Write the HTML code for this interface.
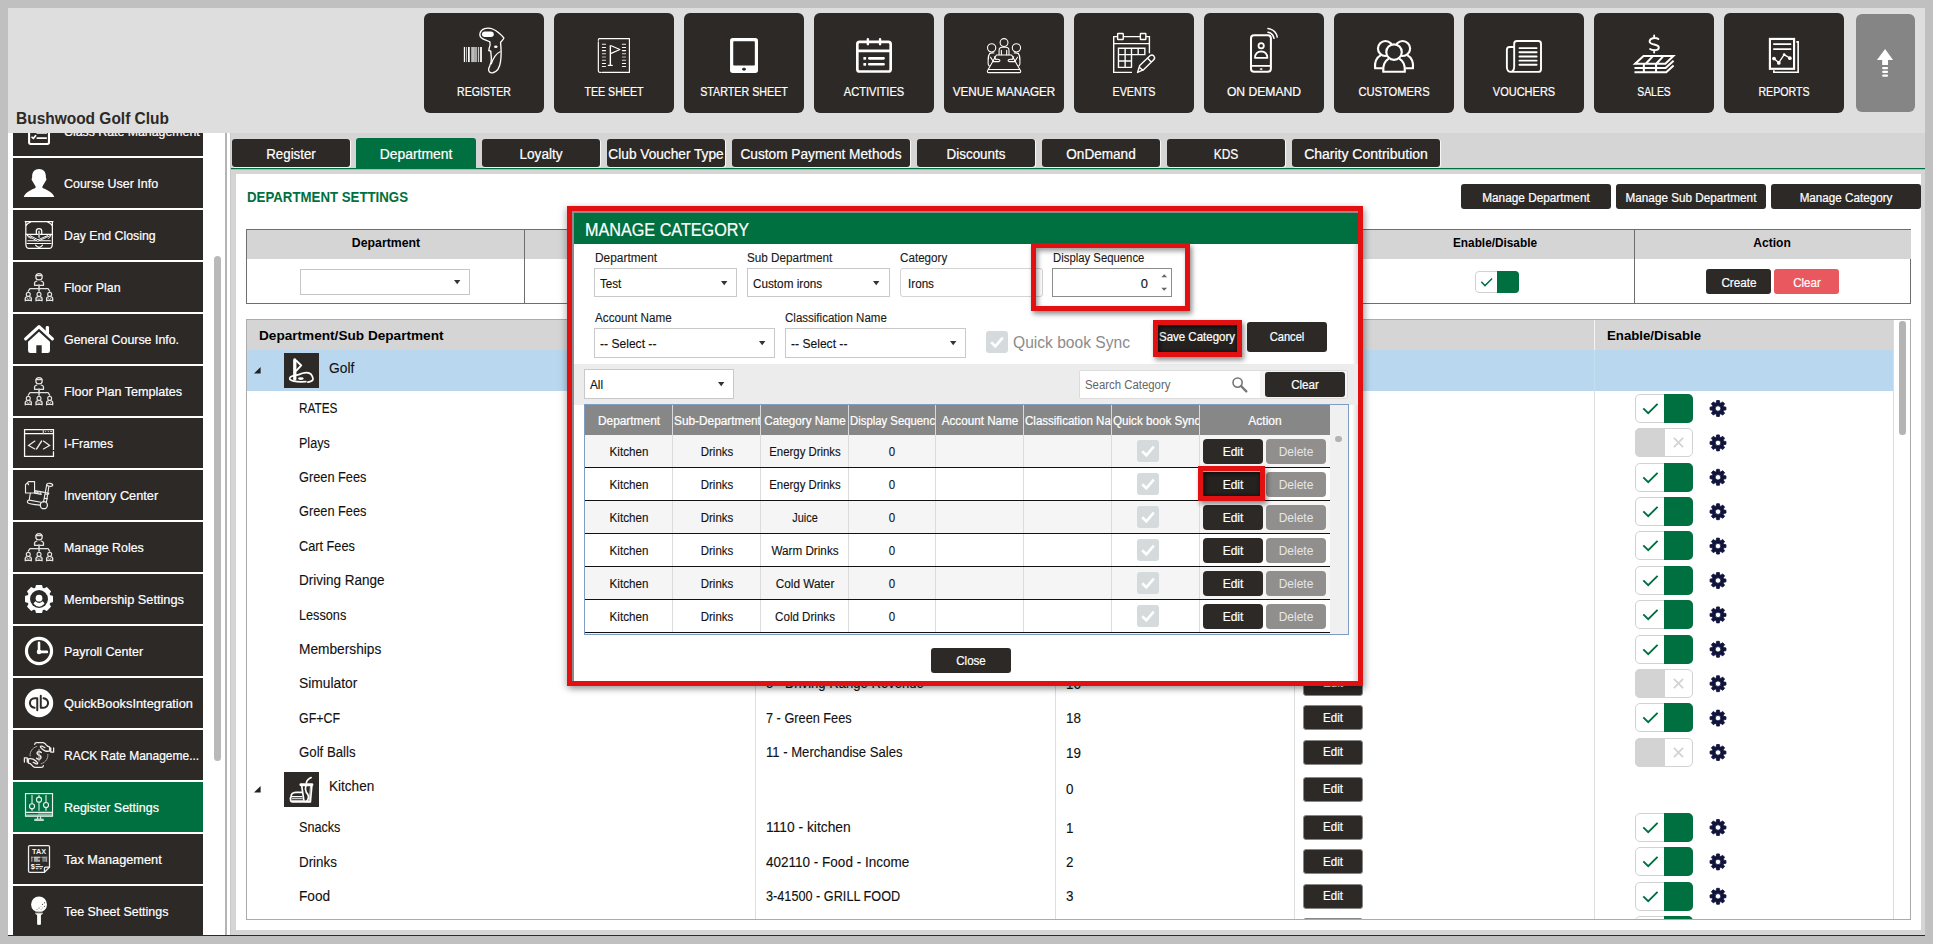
<!DOCTYPE html>
<html lang="en"><head><meta charset="utf-8"><title>Register Settings - Manage Category</title><style>
html,body{margin:0;padding:0}
body{width:1933px;height:944px;background:#c0c0c0;position:relative;overflow:hidden;font-family:"Liberation Sans",sans-serif}
.a{position:absolute;box-sizing:border-box}
.t{position:absolute;white-space:nowrap;display:block}
svg{overflow:visible}
</style></head><body>
<div class="a" style="left:8px;top:8px;width:1917px;height:928px;background:#dedede;"></div>
<div class="a" style="left:8px;top:133px;width:218px;height:802px;background:#fff;"></div>
<div class="a" style="left:225px;top:133px;width:2px;height:802px;background:#b4b4b4;"></div>
<div class="a" style="left:227px;top:133px;width:3px;height:802px;background:#fff;"></div>
<div class="a" style="left:230px;top:133px;width:1px;height:802px;background:#c8c8c8;"></div>
<div class="a" style="left:231px;top:133px;width:1694px;height:802px;background:#d5d5d5;"></div>
<div class="a" style="left:8px;top:935px;width:1917px;height:1px;background:#2d2926;"></div>
<span class="t" style="left:16.0px;top:107.5px;font-size:16px;line-height:21px;font-weight:700;color:#2d2926;transform:scaleX(0.9671);transform-origin:0 50%;">Bushwood Golf Club</span>
<div class="a" style="left:424px;top:13px;width:120px;height:100px;background:#2d2926;border-radius:6px;"></div>
<span class="t" style="left:484.0px;top:83.0px;font-size:13px;line-height:17px;-webkit-text-stroke:0.22px #fff;color:#fff;transform:translateX(-50%) scaleX(0.8111);transform-origin:50% 50%;">REGISTER</span>
<svg class="a" style="left:444px;top:20px" width="1" height="1"><g transform="scale(0.063542)" fill="none" stroke="#fff" stroke-linecap="round" stroke-linejoin="round">
<g stroke="none">
<rect x="312" y="425" width="20" height="237" fill="#fff"/><rect x="347" y="425" width="13" height="237" fill="#ccc"/>
<rect x="378" y="425" width="27" height="237" fill="#fff"/><rect x="428" y="425" width="44" height="237" fill="#bdbdbd"/>
<rect x="472" y="425" width="50" height="237" fill="#a9a9a9"/><rect x="535" y="425" width="17" height="237" fill="#c8c8c8"/>
<rect x="566" y="425" width="32" height="237" fill="#e4e4e4"/>
<rect x="598" y="180" width="185" height="88" rx="44" fill="#fff"/><ellipse cx="815" cy="420" rx="28" ry="20" fill="#fff"/></g>
<path stroke-width="21" d="M600 290 C540 250 560 160 640 135 C720 115 800 150 860 200 C900 235 930 260 942 285 C935 310 900 335 890 352 C900 450 905 560 890 650 C880 730 840 810 770 830 C720 840 690 800 705 760 C720 720 750 690 745 600 C742 560 738 520 736 490 L705 480 L712 440 C722 420 730 380 722 345 C690 325 640 315 600 290 Z"/>
<path stroke-width="19" d="M882 500 C830 520 770 600 745 690"/></g></svg>
<div class="a" style="left:554px;top:13px;width:120px;height:100px;background:#2d2926;border-radius:6px;"></div>
<span class="t" style="left:614.0px;top:83.0px;font-size:13px;line-height:17px;-webkit-text-stroke:0.22px #fff;color:#fff;transform:translateX(-50%) scaleX(0.8195);transform-origin:50% 50%;">TEE SHEET</span>
<svg class="a" style="left:574px;top:20px" width="1" height="1"><g transform="scale(0.063542)" fill="none" stroke="#fff" stroke-linecap="round" stroke-linejoin="round">
<path stroke-width="18" d="M383 345 V800 Q383 825 405 825 H420 M440 825 H872 V293 H400 Q383 293 383 320"/>
<g stroke-width="16"><path d="M446 383 H496 M761 383 H812" stroke="#eee"/><path d="M446 433 H496 M761 433 H812" stroke="#fff"/><path d="M446 482 H496 M761 482 H812" stroke="#fff"/><path d="M446 531 H496 M761 531 H812" stroke="#ddd"/><path d="M446 583 H496 M761 583 H812" stroke="#bbb"/><path d="M446 635 H496 M761 635 H812" stroke="#ddd"/><path d="M446 685 H496 M761 685 H812" stroke="#fff"/><path d="M446 733 H496 M761 733 H812" stroke="#eee"/></g>
<path stroke-width="22" d="M572 398 V715" stroke-linecap="butt"/><path stroke-width="18" d="M540 715 H602"/>
<path stroke-width="18" d="M585 405 L722 465 L585 525"/></g></svg>
<div class="a" style="left:684px;top:13px;width:120px;height:100px;background:#2d2926;border-radius:6px;"></div>
<span class="t" style="left:744.0px;top:83.0px;font-size:13px;line-height:17px;-webkit-text-stroke:0.22px #fff;color:#fff;transform:translateX(-50%) scaleX(0.8240);transform-origin:50% 50%;">STARTER SHEET</span>
<svg class="a" style="left:704px;top:20px" width="1" height="1"><g transform="scale(0.063542)" fill="none" stroke="#fff" stroke-linecap="round" stroke-linejoin="round">
<g stroke="none"><rect x="410" y="285" width="440" height="548" rx="42" fill="#fff"/><rect x="460" y="335" width="340" height="380" rx="12" fill="#2d2926"/><ellipse cx="630" cy="775" rx="30" ry="22" fill="#2d2926"/></g></g></svg>
<div class="a" style="left:814px;top:13px;width:120px;height:100px;background:#2d2926;border-radius:6px;"></div>
<span class="t" style="left:874.0px;top:83.0px;font-size:13px;line-height:17px;-webkit-text-stroke:0.22px #fff;color:#fff;transform:translateX(-50%) scaleX(0.8532);transform-origin:50% 50%;">ACTIVITIES</span>
<svg class="a" style="left:834px;top:20px" width="1" height="1"><g transform="scale(0.063542)" fill="none" stroke="#fff" stroke-linecap="round" stroke-linejoin="round">
<rect x="367" y="345" width="525" height="465" rx="36" stroke-width="42"/><path stroke-width="42" d="M367 487 H892" stroke-linecap="butt"/>
<path stroke-width="38" d="M533 303 V380 M725 303 V380"/>
<g stroke="none" fill="#fff"><rect x="462" y="582" width="44" height="44" rx="7"/><rect x="462" y="675" width="44" height="44" rx="7"/></g>
<path stroke-width="42" d="M555 603 H780 M555 697 H780"/></g></svg>
<div class="a" style="left:944px;top:13px;width:120px;height:100px;background:#2d2926;border-radius:6px;"></div>
<span class="t" style="left:1004.0px;top:83.0px;font-size:13px;line-height:17px;-webkit-text-stroke:0.22px #fff;color:#fff;transform:translateX(-50%) scaleX(0.8989);transform-origin:50% 50%;">VENUE MANAGER</span>
<svg class="a" style="left:964px;top:20px" width="1" height="1"><g transform="scale(0.063542)" fill="none" stroke="#fff" stroke-linecap="round" stroke-linejoin="round">
<g stroke-width="17">
<circle cx="630" cy="355" r="62"/><circle cx="435" cy="438" r="65"/><circle cx="825" cy="438" r="65"/>
<path d="M552 545 V480 Q552 430 600 430 H660 Q708 430 708 480 V545 M588 475 V545 M672 475 V545"/>
<path d="M510 552 H750 L890 800 Q900 828 870 828 H390 Q360 828 370 800 Z M385 778 H875"/>
<path d="M470 520 Q380 505 380 600 V690 Q383 715 400 722 M405 525 Q380 560 385 620"/>
<path d="M790 520 Q880 505 880 600 V690 Q877 715 860 722 M855 525 Q880 560 875 620"/>
<path d="M418 585 L462 655 M462 655 H545 Q575 650 560 628 Q550 615 500 620 L478 578"/>
<path d="M842 585 L798 655 M798 655 H715 Q685 650 700 628 Q710 615 760 620 L782 578"/>
</g></g></svg>
<div class="a" style="left:1074px;top:13px;width:120px;height:100px;background:#2d2926;border-radius:6px;"></div>
<span class="t" style="left:1134.0px;top:83.0px;font-size:13px;line-height:17px;-webkit-text-stroke:0.22px #fff;color:#fff;transform:translateX(-50%) scaleX(0.8267);transform-origin:50% 50%;">EVENTS</span>
<svg class="a" style="left:1094px;top:20px" width="1" height="1"><g transform="scale(0.063542)" fill="none" stroke="#fff" stroke-linecap="round" stroke-linejoin="round">
<g stroke-width="22" stroke-linejoin="miter">
<path d="M598 825 H310 V262 H872 V522 M310 372 H872" stroke-linecap="butt"/>
<rect x="372" y="212" width="88" height="96" rx="8" fill="#2d2926"/><rect x="730" y="212" width="86" height="96" rx="8" fill="#2d2926"/>
<path d="M385 445 H800 V545 H385 Z M490 445 V745 M590 445 V745 M695 445 V545 M385 545 V745 H590 M385 645 H590"/>
<path d="M720 715 L885 560 Q915 540 942 568 Q968 598 940 625 L775 785 L685 825 Z M850 605 L900 660 M718 748 L770 792" stroke-linejoin="round"/>
</g></g></svg>
<div class="a" style="left:1204px;top:13px;width:120px;height:100px;background:#2d2926;border-radius:6px;"></div>
<span class="t" style="left:1264.0px;top:83.0px;font-size:13px;line-height:17px;-webkit-text-stroke:0.22px #fff;color:#fff;transform:translateX(-50%) scaleX(0.9339);transform-origin:50% 50%;">ON DEMAND</span>
<svg class="a" style="left:1224px;top:20px" width="1" height="1"><g transform="scale(0.063542)" fill="none" stroke="#fff" stroke-linecap="round" stroke-linejoin="round">
<rect x="425" y="240" width="313" height="575" rx="48" stroke-width="32"/><path stroke-width="28" d="M425 722 H738" stroke-linecap="butt"/>
<ellipse cx="585" cy="772" rx="24" ry="13" fill="#fff" stroke="none"/>
<circle cx="585" cy="405" r="42" stroke-width="28"/>
<path stroke-width="28" d="M487 595 Q492 498 585 495 Q678 498 683 595 Z"/>
<path stroke-width="24" d="M692 193 Q770 205 787 288 M692 135 Q815 150 838 268"/></g></svg>
<div class="a" style="left:1334px;top:13px;width:120px;height:100px;background:#2d2926;border-radius:6px;"></div>
<span class="t" style="left:1394.0px;top:83.0px;font-size:13px;line-height:17px;-webkit-text-stroke:0.22px #fff;color:#fff;transform:translateX(-50%) scaleX(0.8596);transform-origin:50% 50%;">CUSTOMERS</span>
<svg class="a" style="left:1354px;top:20px" width="1" height="1"><g transform="scale(0.063542)" fill="none" stroke="#fff" stroke-linecap="round" stroke-linejoin="round">
<g stroke-width="34">
<circle cx="495" cy="448" r="118"/><circle cx="765" cy="448" r="118"/>
<path d="M332 760 C322 650 362 585 422 552 M318 760 H450 M928 760 C938 650 898 585 838 552 M942 760 H810" stroke-linecap="butt"/>
<circle cx="630" cy="505" r="122" fill="#2d2926"/>
<path d="M460 812 C452 700 500 635 548 608 M800 812 C808 700 760 635 712 608 M445 815 H815" stroke-linecap="butt"/>
</g></g></svg>
<div class="a" style="left:1464px;top:13px;width:120px;height:100px;background:#2d2926;border-radius:6px;"></div>
<span class="t" style="left:1524.0px;top:83.0px;font-size:13px;line-height:17px;-webkit-text-stroke:0.22px #fff;color:#fff;transform:translateX(-50%) scaleX(0.8456);transform-origin:50% 50%;">VOUCHERS</span>
<svg class="a" style="left:1484px;top:20px" width="1" height="1"><g transform="scale(0.063542)" fill="none" stroke="#fff" stroke-linecap="round" stroke-linejoin="round">
<path stroke-width="30" d="M475 425 V372 Q475 330 517 330 H855 Q897 330 897 372 V775 Q897 817 855 817 H425 Q360 815 360 740 V470 Q360 425 402 425 H475 V735 Q475 800 425 817"/>
<path stroke-width="30" d="M558 442 H828 M558 508 H828 M558 575 H828 M558 640 H828 M558 705 H828"/></g></svg>
<div class="a" style="left:1594px;top:13px;width:120px;height:100px;background:#2d2926;border-radius:6px;"></div>
<span class="t" style="left:1654.0px;top:83.0px;font-size:13px;line-height:17px;-webkit-text-stroke:0.22px #fff;color:#fff;transform:translateX(-50%) scaleX(0.7992);transform-origin:50% 50%;">SALES</span>
<svg class="a" style="left:1614px;top:20px" width="1" height="1"><g transform="scale(0.063542)" fill="none" stroke="#fff" stroke-linecap="round" stroke-linejoin="round">
<g stroke-width="32" stroke-linejoin="miter">
<path d="M332 690 L465 565 H935 L808 690 Z M500 688 L612 568 M665 688 L777 568"/>
<path d="M322 757 H812 L938 642 M322 822 H822 L938 716 M470 690 V822 M662 690 V822" stroke-linecap="butt"/>
<path d="M698 300 C660 272 560 280 560 338 C560 400 705 372 705 432 C705 482 612 486 568 456 M632 242 V288 M632 470 V512" stroke-width="30"/>
</g></g></svg>
<div class="a" style="left:1724px;top:13px;width:120px;height:100px;background:#2d2926;border-radius:6px;"></div>
<span class="t" style="left:1784.0px;top:83.0px;font-size:13px;line-height:17px;-webkit-text-stroke:0.22px #fff;color:#fff;transform:translateX(-50%) scaleX(0.8178);transform-origin:50% 50%;">REPORTS</span>
<svg class="a" style="left:1744px;top:20px" width="1" height="1"><g transform="scale(0.063542)" fill="none" stroke="#fff" stroke-linecap="round" stroke-linejoin="round">
<g stroke-linejoin="miter"><rect x="408" y="298" width="380" height="470" stroke-width="34"/>
<path stroke-width="26" d="M824 345 H852 V822 H470 V792" stroke-linecap="butt"/>
<path stroke-width="28" d="M470 378 H733 M470 458 H733"/>
<path stroke-width="20" d="M472 605 L548 672 L632 545 L722 600" stroke-linejoin="round"/>
<g stroke="none" fill="#fff"><circle cx="472" cy="607" r="30"/><circle cx="548" cy="675" r="29"/><circle cx="632" cy="543" r="20"/><circle cx="722" cy="600" r="29"/></g></g></g></svg>
<div class="a" style="left:1856px;top:14px;width:59px;height:98px;background:#858585;border-radius:6px;"></div>
<svg class="a" style="left:1856px;top:30px" width="1" height="1"><g transform="scale(0.074167)" fill="#fff"><path d="M392 255 L500 405 H432 V472 H353 V405 H283 Z"/><rect x="353" y="500" width="79" height="28" rx="12"/><rect x="353" y="550" width="79" height="30" rx="13"/><rect x="353" y="600" width="79" height="32" rx="14"/></g></svg>
<div class="a" style="left:8px;top:133px;width:218px;height:802px;overflow:hidden">
<div class="a" style="left:5px;top:-26.6px;width:190px;height:49.4px;background:#2d2926;"></div>
<span class="t" style="left:56.0px;top:-10.0px;font-size:13px;line-height:17px;-webkit-text-stroke:0.22px #fff;color:#fff;transform:scaleX(0.9484);transform-origin:0 50%;">Class Rate Management</span>
<svg class="a" style="left:11px;top:-17px" width="1" height="1"><g transform="scale(0.031771)" fill="none" stroke="#fff" stroke-linecap="round" stroke-linejoin="round"><g transform="translate(0,535)"><rect x="318" y="-250" width="625" height="595" rx="50" stroke-width="66"/><path stroke-width="55" d="M412 135 L452 172 L520 88 M575 160 H855 M575 0 H855"/></g></g></svg>
<div class="a" style="left:5px;top:25.4px;width:190px;height:49.4px;background:#2d2926;"></div>
<span class="t" style="left:56.0px;top:42.0px;font-size:13px;line-height:17px;-webkit-text-stroke:0.22px #fff;color:#fff;transform:scaleX(0.9577);transform-origin:0 50%;">Course User Info</span>
<svg class="a" style="left:11px;top:35px" width="1" height="1"><g transform="scale(0.031771)" fill="none" stroke="#fff" stroke-linecap="round" stroke-linejoin="round"><path stroke="none" fill="#fff" d="M150 910 C190 800 330 700 500 640 C540 620 530 580 500 540 C450 470 430 420 400 380 C390 340 410 320 415 290 C400 120 500 30 630 30 C760 30 860 120 845 290 C850 320 870 340 860 380 C830 420 810 470 760 540 C730 580 720 620 760 640 C930 700 1070 800 1110 910 Z"/></g></svg>
<div class="a" style="left:5px;top:77.4px;width:190px;height:49.4px;background:#2d2926;"></div>
<span class="t" style="left:56.0px;top:94.0px;font-size:13px;line-height:17px;-webkit-text-stroke:0.22px #fff;color:#fff;transform:scaleX(0.9460);transform-origin:0 50%;">Day End Closing</span>
<svg class="a" style="left:11px;top:87px" width="1" height="1"><g transform="scale(0.031771)" fill="none" stroke="#fff" stroke-linecap="round" stroke-linejoin="round"><g stroke-width="38"><path d="M195 50 H1070 M215 50 V740 Q215 890 300 890 H965 Q1050 890 1050 740 V50 M215 185 Q260 100 360 72 M1050 185 Q1005 100 905 72"/>
<path d="M215 452 H1050" stroke-width="34"/><path d="M545 440 V345 Q545 270 630 270 Q715 270 715 345 V440" stroke-width="40"/><path d="M630 340 V560" stroke="#c4c4c4" stroke-width="55" stroke-linecap="butt"/>
<path d="M262 482 L590 672 L1000 482 M350 492 L600 622 L900 492" stroke-width="30"/><path d="M262 482 Q270 560 380 580 M1000 482 Q990 560 920 585" stroke-width="26"/>
<path d="M250 742 H1010 M280 652 H545 M650 652 H985 M520 792 Q580 862 630 862 Q690 862 740 792" stroke-width="34"/></g></g></svg>
<div class="a" style="left:5px;top:129.4px;width:190px;height:49.4px;background:#2d2926;"></div>
<span class="t" style="left:56.0px;top:146.0px;font-size:13px;line-height:17px;-webkit-text-stroke:0.22px #fff;color:#fff;transform:scaleX(0.9540);transform-origin:0 50%;">Floor Plan</span>
<svg class="a" style="left:11px;top:139px" width="1" height="1"><g transform="scale(0.031771)" fill="none" stroke="#fff" stroke-linecap="round" stroke-linejoin="round"><g stroke="#e2e2e2"><circle cx="630" cy="150" r="100" stroke-width="42"/><path d="M545 110 H715" stroke-width="40"/><path d="M490 420 V340 Q500 290 560 285 M770 420 V340 Q760 290 700 285 M490 420 H770" stroke-width="42"/>
<path d="M630 395 V610" stroke="#cfcfcf" stroke-width="52" stroke-linecap="butt"/><path d="M292 600 L345 520 H915 L965 600" stroke-width="40"/>
<circle cx="292" cy="705" r="62" stroke-width="36"/><path d="M197 905 V830 Q202 790 252 785 M387 905 V830 Q382 790 332 785 M197 895 H387" stroke-width="42"/><path d="M252 820 L292 870 L332 820" stroke-width="26" stroke="#bbb"/><circle cx="630" cy="705" r="62" stroke-width="36"/><path d="M535 905 V830 Q540 790 590 785 M725 905 V830 Q720 790 670 785 M535 895 H725" stroke-width="42"/><path d="M590 820 L630 870 L670 820" stroke-width="26" stroke="#bbb"/><circle cx="965" cy="705" r="62" stroke-width="36"/><path d="M870 905 V830 Q875 790 925 785 M1060 905 V830 Q1055 790 1005 785 M870 895 H1060" stroke-width="42"/><path d="M925 820 L965 870 L1005 820" stroke-width="26" stroke="#bbb"/></g></g></svg>
<div class="a" style="left:5px;top:181.4px;width:190px;height:49.4px;background:#2d2926;"></div>
<span class="t" style="left:56.0px;top:198.0px;font-size:13px;line-height:17px;-webkit-text-stroke:0.22px #fff;color:#fff;transform:scaleX(0.9535);transform-origin:0 50%;">General Course Info.</span>
<svg class="a" style="left:11px;top:191px" width="1" height="1"><g transform="scale(0.031771)" fill="none" stroke="#fff" stroke-linecap="round" stroke-linejoin="round"><path d="M210 470 L630 85 L1050 470" stroke-width="100"/><g stroke="none" fill="#fff"><rect x="840" y="65" width="106" height="260" rx="45"/><path d="M285 560 L630 245 L975 560 V840 Q975 915 900 915 H715 V670 H545 V915 H360 Q285 915 285 840 Z"/></g></g></svg>
<div class="a" style="left:5px;top:233.4px;width:190px;height:49.4px;background:#2d2926;"></div>
<span class="t" style="left:56.0px;top:250.0px;font-size:13px;line-height:17px;-webkit-text-stroke:0.22px #fff;color:#fff;transform:scaleX(0.9694);transform-origin:0 50%;">Floor Plan Templates</span>
<svg class="a" style="left:11px;top:243px" width="1" height="1"><g transform="scale(0.031771)" fill="none" stroke="#fff" stroke-linecap="round" stroke-linejoin="round"><g stroke="#e2e2e2"><circle cx="630" cy="150" r="100" stroke-width="42"/><path d="M545 110 H715" stroke-width="40"/><path d="M490 420 V340 Q500 290 560 285 M770 420 V340 Q760 290 700 285 M490 420 H770" stroke-width="42"/>
<path d="M630 395 V610" stroke="#cfcfcf" stroke-width="52" stroke-linecap="butt"/><path d="M292 600 L345 520 H915 L965 600" stroke-width="40"/>
<circle cx="292" cy="705" r="62" stroke-width="36"/><path d="M197 905 V830 Q202 790 252 785 M387 905 V830 Q382 790 332 785 M197 895 H387" stroke-width="42"/><path d="M252 820 L292 870 L332 820" stroke-width="26" stroke="#bbb"/><circle cx="630" cy="705" r="62" stroke-width="36"/><path d="M535 905 V830 Q540 790 590 785 M725 905 V830 Q720 790 670 785 M535 895 H725" stroke-width="42"/><path d="M590 820 L630 870 L670 820" stroke-width="26" stroke="#bbb"/><circle cx="965" cy="705" r="62" stroke-width="36"/><path d="M870 905 V830 Q875 790 925 785 M1060 905 V830 Q1055 790 1005 785 M870 895 H1060" stroke-width="42"/><path d="M925 820 L965 870 L1005 820" stroke-width="26" stroke="#bbb"/></g></g></svg>
<div class="a" style="left:5px;top:285.4px;width:190px;height:49.4px;background:#2d2926;"></div>
<span class="t" style="left:56.0px;top:302.0px;font-size:13px;line-height:17px;-webkit-text-stroke:0.22px #fff;color:#fff;transform:scaleX(0.9433);transform-origin:0 50%;">I-Frames</span>
<svg class="a" style="left:11px;top:295px" width="1" height="1"><g transform="scale(0.031771)" fill="none" stroke="#fff" stroke-linecap="round" stroke-linejoin="round"><g stroke-linejoin="miter"><path d="M1085 690 V50 H175 V895 H1085 V728 M175 175 H1085" stroke-width="40" stroke-linecap="butt"/><path d="M765 50 V175" stroke-width="40" stroke="#d0d0d0"/>
<g stroke="none" fill="#bdbdbd"><circle cx="835" cy="112" r="20"/><circle cx="925" cy="112" r="20"/><rect x="980" y="98" width="62" height="28" rx="10"/></g>
<path d="M500 410 L300 548 L500 660 M770 410 L965 548 L770 660" stroke-width="38" stroke="#ececec"/><path d="M710 410 L555 660" stroke-width="46" stroke="#ececec"/></g></g></svg>
<div class="a" style="left:5px;top:337.4px;width:190px;height:49.4px;background:#2d2926;"></div>
<span class="t" style="left:56.0px;top:354.0px;font-size:13px;line-height:17px;-webkit-text-stroke:0.22px #fff;color:#fff;transform:scaleX(0.9797);transform-origin:0 50%;">Inventory Center</span>
<svg class="a" style="left:11px;top:347px" width="1" height="1"><g transform="scale(0.031771)" fill="none" stroke="#fff" stroke-linecap="round" stroke-linejoin="round"><g stroke="#ededed" stroke-width="36"><path d="M205 145 L300 50 H490 V410 H205 Z M250 115 Q300 105 300 150"/>
<path d="M490 332 L800 388 M490 412 L700 452 M530 362 V412 M575 372 V420 M625 385 V440 H685 V398"/>
<ellipse cx="968" cy="150" rx="95" ry="46" transform="rotate(8 968 150)"/><path d="M872 150 L772 690 M942 195 L862 705 M850 400 L940 420 M830 440 L925 455 M815 580 L900 590"/>
<path d="M355 420 L322 625 Q240 655 272 712 Q305 762 665 792 M322 632 L690 702"/><circle cx="782" cy="792" r="112" stroke-width="40"/></g></g></svg>
<div class="a" style="left:5px;top:389.4px;width:190px;height:49.4px;background:#2d2926;"></div>
<span class="t" style="left:56.0px;top:406.0px;font-size:13px;line-height:17px;-webkit-text-stroke:0.22px #fff;color:#fff;transform:scaleX(0.9507);transform-origin:0 50%;">Manage Roles</span>
<svg class="a" style="left:11px;top:399px" width="1" height="1"><g transform="scale(0.031771)" fill="none" stroke="#fff" stroke-linecap="round" stroke-linejoin="round"><g stroke="#e2e2e2"><circle cx="630" cy="150" r="100" stroke-width="42"/><path d="M545 110 H715" stroke-width="40"/><path d="M490 420 V340 Q500 290 560 285 M770 420 V340 Q760 290 700 285 M490 420 H770" stroke-width="42"/>
<path d="M630 395 V610" stroke="#cfcfcf" stroke-width="52" stroke-linecap="butt"/><path d="M292 600 L345 520 H915 L965 600" stroke-width="40"/>
<circle cx="292" cy="705" r="62" stroke-width="36"/><path d="M197 905 V830 Q202 790 252 785 M387 905 V830 Q382 790 332 785 M197 895 H387" stroke-width="42"/><path d="M252 820 L292 870 L332 820" stroke-width="26" stroke="#bbb"/><circle cx="630" cy="705" r="62" stroke-width="36"/><path d="M535 905 V830 Q540 790 590 785 M725 905 V830 Q720 790 670 785 M535 895 H725" stroke-width="42"/><path d="M590 820 L630 870 L670 820" stroke-width="26" stroke="#bbb"/><circle cx="965" cy="705" r="62" stroke-width="36"/><path d="M870 905 V830 Q875 790 925 785 M1060 905 V830 Q1055 790 1005 785 M870 895 H1060" stroke-width="42"/><path d="M925 820 L965 870 L1005 820" stroke-width="26" stroke="#bbb"/></g></g></svg>
<div class="a" style="left:5px;top:441.4px;width:190px;height:49.4px;background:#2d2926;"></div>
<span class="t" style="left:56.0px;top:458.0px;font-size:13px;line-height:17px;-webkit-text-stroke:0.22px #fff;color:#fff;transform:scaleX(0.9818);transform-origin:0 50%;">Membership Settings</span>
<svg class="a" style="left:11px;top:451px" width="1" height="1"><g transform="scale(0.031771)" fill="none" stroke="#fff" stroke-linecap="round" stroke-linejoin="round"><path stroke="#fff" stroke-width="40" fill="#fff" d="M527 138 L549 52 L711 52 L733 138 L793 162 L870 118 L984 232 L940 309 L964 369 L1050 391 L1050 553 L964 575 L940 635 L984 712 L870 826 L793 782 L733 806 L711 892 L549 892 L527 806 L467 782 L390 826 L276 712 L320 635 L296 575 L210 553 L210 391 L296 369 L320 309 L276 232 L390 118 L467 162 Z"/><circle cx="630" cy="472" r="282" fill="#2d2926" stroke="none"/><circle cx="630" cy="445" r="106" fill="#fff" stroke="none"/><path stroke="none" fill="#fff" d="M520 545 Q630 645 740 545 Q800 585 802 622 Q705 722 630 717 Q545 717 458 622 Q465 580 520 545 Z"/></g></svg>
<div class="a" style="left:5px;top:493.4px;width:190px;height:49.4px;background:#2d2926;"></div>
<span class="t" style="left:56.0px;top:510.0px;font-size:13px;line-height:17px;-webkit-text-stroke:0.22px #fff;color:#fff;transform:scaleX(0.9596);transform-origin:0 50%;">Payroll Center</span>
<svg class="a" style="left:11px;top:503px" width="1" height="1"><g transform="scale(0.031771)" fill="none" stroke="#fff" stroke-linecap="round" stroke-linejoin="round"><circle cx="630" cy="472" r="395" stroke-width="100"/><path d="M630 215 V500 H880" stroke-width="80"/><circle cx="630" cy="500" r="72" fill="#fff" stroke="none"/></g></svg>
<div class="a" style="left:5px;top:545.4px;width:190px;height:49.4px;background:#2d2926;"></div>
<span class="t" style="left:56.0px;top:562.0px;font-size:13px;line-height:17px;-webkit-text-stroke:0.22px #fff;color:#fff;transform:scaleX(0.9861);transform-origin:0 50%;">QuickBooksIntegration</span>
<svg class="a" style="left:11px;top:555px" width="1" height="1"><g transform="scale(0.031771)" fill="none" stroke="#fff" stroke-linecap="round" stroke-linejoin="round"><circle cx="630" cy="472" r="447" fill="#fff" stroke="none"/><g stroke="#2d2926" stroke-width="62"><path d="M575 700 V322 H500 Q345 332 345 475 Q350 600 490 622"/><path d="M685 242 V625 H760 Q910 610 915 470 Q905 340 770 322"/></g></g></svg>
<div class="a" style="left:5px;top:597.4px;width:190px;height:49.4px;background:#2d2926;"></div>
<span class="t" style="left:56.0px;top:614.0px;font-size:13px;line-height:17px;-webkit-text-stroke:0.22px #fff;color:#fff;transform:scaleX(0.9212);transform-origin:0 50%;">RACK Rate Manageme...</span>
<svg class="a" style="left:11px;top:607px" width="1" height="1"><g transform="scale(0.031771)" fill="none" stroke="#fff" stroke-linecap="round" stroke-linejoin="round"><g stroke="#ededed"><path d="M492 135 Q500 82 560 80 H760 Q822 100 862 160 Q900 210 962 215 V350 Q870 362 820 340 Q730 300 680 232 Q652 182 722 192 Q780 232 812 242 M1000 250 V380 H1090 V250" stroke-width="40"/><g transform="rotate(180 630 472)"><path d="M492 135 Q500 82 560 80 H760 Q822 100 862 160 Q900 210 962 215 V350 Q870 362 820 340 Q730 300 680 232 Q652 182 722 192 Q780 232 812 242 M1000 250 V380 H1090 V250" stroke-width="40"/></g><path d="M700 392 Q640 342 580 380 Q540 432 630 476 Q722 520 680 580 Q630 632 555 576" stroke-width="46"/><path d="M630 300 V660" stroke-width="34" stroke="#bbb"/><path d="M560 205 A283 283 0 0 0 350 500 M700 745 A283 283 0 0 0 905 430" stroke="#c8c8c8" stroke-width="30" stroke-dasharray="26 34"/></g></g></svg>
<div class="a" style="left:5px;top:649.4px;width:190px;height:49.4px;background:#007040;"></div>
<span class="t" style="left:56.0px;top:666.0px;font-size:13px;line-height:17px;-webkit-text-stroke:0.22px #fff;color:#fff;transform:scaleX(0.9583);transform-origin:0 50%;">Register Settings</span>
<svg class="a" style="left:11px;top:659px" width="1" height="1"><g transform="scale(0.031771)" fill="none" stroke="#fff" stroke-linecap="round" stroke-linejoin="round"><g stroke="#e8f3ed"><rect x="205" y="50" width="850" height="712" stroke-width="36" stroke-linejoin="miter"/><path d="M205 640 H1055" stroke-width="36"/><rect x="225" y="700" width="815" height="62" fill="rgba(255,255,255,.45)" stroke="none"/><rect x="600" y="660" width="440" height="60" fill="rgba(255,255,255,.3)" stroke="none"/>
<path d="M410 115 V575 M630 115 V575 M850 115 V575" stroke="rgba(255,255,255,.6)" stroke-width="52"/><circle cx="410" cy="450" r="80" fill="#007040" stroke-width="36"/><circle cx="630" cy="240" r="80" fill="#007040" stroke-width="36"/><circle cx="850" cy="410" r="80" fill="#007040" stroke-width="36"/>
<path d="M585 775 V840 M680 775 V840" stroke-width="30"/><rect x="480" y="860" width="300" height="46" fill="#fff" stroke="none"/><path d="M500 850 Q630 800 760 850" stroke="rgba(255,255,255,.5)" stroke-width="26"/></g></g></svg>
<div class="a" style="left:5px;top:701.4px;width:190px;height:49.4px;background:#2d2926;"></div>
<span class="t" style="left:56.0px;top:718.0px;font-size:13px;line-height:17px;-webkit-text-stroke:0.22px #fff;color:#fff;transform:scaleX(0.9794);transform-origin:0 50%;">Tax Management</span>
<svg class="a" style="left:11px;top:711px" width="1" height="1"><g transform="scale(0.031771)" fill="none" stroke="#fff" stroke-linecap="round" stroke-linejoin="round"><g stroke="#efefef" stroke-width="40"><path d="M300 90 Q300 50 340 50 H920 Q960 50 960 90 V730 L800 890 H340 Q300 890 300 850 Z"/><path d="M960 730 H840 Q800 730 800 770 V890"/></g>
<text x="630" y="318" font-family="Liberation Sans,sans-serif" font-weight="700" font-size="215" text-anchor="middle" textLength="440" lengthAdjust="spacingAndGlyphs" fill="#f2f2f2" stroke="none">TAX</text>
<g stroke="none"><rect x="380" y="400" width="45" height="160" fill="#8d8d8d"/><rect x="470" y="400" width="192" height="160" fill="#a9a9a9"/><rect x="730" y="400" width="155" height="160" fill="#777"/><rect x="380" y="400" width="505" height="40" fill="rgba(255,255,255,.35)"/><circle cx="630" cy="470" r="28" fill="#2d2926"/><rect x="850" y="400" width="35" height="160" fill="#9a9a9a"/></g>
<text x="432" y="800" font-family="Liberation Sans,sans-serif" font-weight="700" font-size="235" text-anchor="middle" fill="#fff" stroke="none">$</text>
<path d="M535 645 H655" stroke="#ccc" stroke-width="36"/><path d="M535 710 H745" stroke="#e3e3e3" stroke-width="36"/><path d="M540 775 H595 M665 775 H705" stroke="#ccc" stroke-width="36"/></g></svg>
<div class="a" style="left:5px;top:753.4px;width:190px;height:49.4px;background:#2d2926;"></div>
<span class="t" style="left:56.0px;top:770.0px;font-size:13px;line-height:17px;-webkit-text-stroke:0.22px #fff;color:#fff;transform:scaleX(0.9564);transform-origin:0 50%;">Tee Sheet Settings</span>
<svg class="a" style="left:11px;top:763px" width="1" height="1"><g transform="scale(0.031771)" fill="none" stroke="#fff" stroke-linecap="round" stroke-linejoin="round"><g stroke="none"><circle cx="630" cy="265" r="250" fill="#fff"/><rect x="510" y="488" width="240" height="34" fill="#8b8b8b"/><path fill="#fff" d="M500 540 H760 Q740 580 690 600 V900 Q630 922 570 900 V600 Q520 580 500 540 Z"/>
<g fill="#555"><ellipse cx="800" cy="215" rx="16" ry="26"/><circle cx="740" cy="266" r="20"/><circle cx="800" cy="326" r="20"/><circle cx="630" cy="376" r="24" fill="#9a9a9a"/><ellipse cx="746" cy="378" rx="14" ry="22" fill="#aaa"/><ellipse cx="692" cy="326" rx="24" ry="12" fill="#bbb"/><ellipse cx="566" cy="426" rx="28" ry="13" fill="#999"/><ellipse cx="696" cy="427" rx="26" ry="13" fill="#999"/></g></g></g></svg>
</div>
<div class="a" style="left:214px;top:256px;width:7px;height:505px;background:#b9b9b9;border-radius:3.5px;"></div>
<div class="a" style="left:232px;top:139px;width:118px;height:28px;background:#2d2926;border-radius:3px;box-shadow:0.6px 0.6px 0 0.5px rgba(255,255,255,.75);"></div>
<span class="t" style="left:291.0px;top:145.0px;font-size:14px;line-height:18px;-webkit-text-stroke:0.22px #fff;color:#fff;transform:translateX(-50%) scaleX(0.9491);transform-origin:50% 50%;">Register</span>
<div class="a" style="left:356px;top:138px;width:120px;height:30px;background:#007040;border-radius:3px;border-bottom-left-radius:0;border-bottom-right-radius:0;"></div>
<span class="t" style="left:416.0px;top:145.0px;font-size:14px;line-height:18px;-webkit-text-stroke:0.22px #fff;color:#fff;transform:translateX(-50%) scaleX(0.9909);transform-origin:50% 50%;">Department</span>
<div class="a" style="left:482px;top:139px;width:118px;height:28px;background:#2d2926;border-radius:3px;box-shadow:0.6px 0.6px 0 0.5px rgba(255,255,255,.75);"></div>
<span class="t" style="left:541.0px;top:145.0px;font-size:14px;line-height:18px;-webkit-text-stroke:0.22px #fff;color:#fff;transform:translateX(-50%) scaleX(0.9682);transform-origin:50% 50%;">Loyalty</span>
<div class="a" style="left:607px;top:139px;width:118px;height:28px;background:#2d2926;border-radius:3px;box-shadow:0.6px 0.6px 0 0.5px rgba(255,255,255,.75);"></div>
<span class="t" style="left:666.0px;top:145.0px;font-size:14px;line-height:18px;-webkit-text-stroke:0.22px #fff;color:#fff;transform:translateX(-50%) scaleX(0.9764);transform-origin:50% 50%;">Club Voucher Type</span>
<div class="a" style="left:732px;top:139px;width:178px;height:28px;background:#2d2926;border-radius:3px;box-shadow:0.6px 0.6px 0 0.5px rgba(255,255,255,.75);"></div>
<span class="t" style="left:821.0px;top:145.0px;font-size:14px;line-height:18px;-webkit-text-stroke:0.22px #fff;color:#fff;transform:translateX(-50%) scaleX(0.9766);transform-origin:50% 50%;">Custom Payment Methods</span>
<div class="a" style="left:917px;top:139px;width:118px;height:28px;background:#2d2926;border-radius:3px;box-shadow:0.6px 0.6px 0 0.5px rgba(255,255,255,.75);"></div>
<span class="t" style="left:976.0px;top:145.0px;font-size:14px;line-height:18px;-webkit-text-stroke:0.22px #fff;color:#fff;transform:translateX(-50%) scaleX(0.9590);transform-origin:50% 50%;">Discounts</span>
<div class="a" style="left:1042px;top:139px;width:118px;height:28px;background:#2d2926;border-radius:3px;box-shadow:0.6px 0.6px 0 0.5px rgba(255,255,255,.75);"></div>
<span class="t" style="left:1101.0px;top:145.0px;font-size:14px;line-height:18px;-webkit-text-stroke:0.22px #fff;color:#fff;transform:translateX(-50%) scaleX(0.9687);transform-origin:50% 50%;">OnDemand</span>
<div class="a" style="left:1167px;top:139px;width:118px;height:28px;background:#2d2926;border-radius:3px;box-shadow:0.6px 0.6px 0 0.5px rgba(255,255,255,.75);"></div>
<span class="t" style="left:1226.0px;top:145.0px;font-size:14px;line-height:18px;-webkit-text-stroke:0.22px #fff;color:#fff;transform:translateX(-50%) scaleX(0.8519);transform-origin:50% 50%;">KDS</span>
<div class="a" style="left:1292px;top:139px;width:148px;height:28px;background:#2d2926;border-radius:3px;box-shadow:0.6px 0.6px 0 0.5px rgba(255,255,255,.75);"></div>
<span class="t" style="left:1366.0px;top:145.0px;font-size:14px;line-height:18px;-webkit-text-stroke:0.22px #fff;color:#fff;transform:translateX(-50%) scaleX(0.9996);transform-origin:50% 50%;">Charity Contribution</span>
<div class="a" style="left:231px;top:168px;width:1694px;height:1px;background:#007040;"></div>
<div class="a" style="left:231px;top:169px;width:1694px;height:1px;background:rgba(0,112,64,.22);"></div>
<div class="a" style="left:236px;top:174px;width:1685px;height:756px;background:#fff;"></div>
<span class="t" style="left:246.5px;top:188.0px;font-size:14px;line-height:18px;font-weight:700;color:#007040;transform:scaleX(0.9466);transform-origin:0 50%;">DEPARTMENT SETTINGS</span>
<div class="a" style="left:1461px;top:184.2px;width:150px;height:24.8px;background:#2d2926;border-radius:3px;"></div>
<span class="t" style="left:1536.0px;top:189.5px;font-size:12px;line-height:16px;-webkit-text-stroke:0.22px #fff;color:#fff;transform:translateX(-50%) scaleX(0.9832);transform-origin:50% 50%;">Manage Department</span>
<div class="a" style="left:1616px;top:184.2px;width:150px;height:24.8px;background:#2d2926;border-radius:3px;"></div>
<span class="t" style="left:1691.0px;top:189.5px;font-size:12px;line-height:16px;-webkit-text-stroke:0.22px #fff;color:#fff;transform:translateX(-50%) scaleX(0.9754);transform-origin:50% 50%;">Manage Sub Department</span>
<div class="a" style="left:1771px;top:184.2px;width:150px;height:24.8px;background:#2d2926;border-radius:3px;"></div>
<span class="t" style="left:1846.0px;top:189.5px;font-size:12px;line-height:16px;-webkit-text-stroke:0.22px #fff;color:#fff;transform:translateX(-50%) scaleX(0.9719);transform-origin:50% 50%;">Manage Category</span>
<div class="a" style="left:246px;top:229px;width:1665px;height:75px;background:#fff;border:1px solid #6e6e6e;"></div>
<div class="a" style="left:247px;top:230px;width:1663.5px;height:28.6px;background:#d5d5d5;"></div>
<div class="a" style="left:524px;top:229px;width:1px;height:75px;background:#6e6e6e;"></div>
<div class="a" style="left:801.4px;top:229px;width:1px;height:75px;background:#6e6e6e;"></div>
<div class="a" style="left:1078.8px;top:229px;width:1px;height:75px;background:#6e6e6e;"></div>
<div class="a" style="left:1356.2px;top:229px;width:1px;height:75px;background:#6e6e6e;"></div>
<div class="a" style="left:1634px;top:229px;width:1px;height:75px;background:#6e6e6e;"></div>
<span class="t" style="left:385.5px;top:235.0px;font-size:12px;line-height:16px;font-weight:700;color:#000;transform:translateX(-50%) scaleX(1.0243);transform-origin:50% 50%;">Department</span>
<span class="t" style="left:1495.0px;top:235.0px;font-size:12px;line-height:16px;font-weight:700;color:#000;transform:translateX(-50%) scaleX(0.9840);transform-origin:50% 50%;">Enable/Disable</span>
<span class="t" style="left:1772.0px;top:235.0px;font-size:12px;line-height:16px;font-weight:700;color:#000;transform:translateX(-50%) scaleX(1.0045);transform-origin:50% 50%;">Action</span>
<div class="a" style="left:300px;top:269px;width:170px;height:25.6px;background:#fff;border:1px solid #c6c6c6;"></div>
<svg class="a" style="left:454px;top:280px;" width="7" height="5" viewBox="0 0 7 5"><path d="M0 0 H6.4 L3.2 4.2 Z" fill="#333"/></svg>
<div class="a" style="left:1475px;top:271px;width:44px;height:22px;background:#fff;border:1px solid #d2d2d2;border-radius:4px;"></div>
<div class="a" style="left:1497px;top:271px;width:22px;height:22px;background:#007040;border-radius:0 4px 4px 0;"></div>
<svg class="a" style="left:1475px;top:271px;" width="22" height="22" viewBox="0 0 22 22"><path d="M6.3 10.8 L10.0 14.6 L17.1 7.4" fill="none" stroke="#007040" stroke-width="1.44"/></svg>
<div class="a" style="left:1706px;top:269px;width:65px;height:25px;background:#2d2926;border-radius:3px;"></div>
<span class="t" style="left:1738.5px;top:274.5px;font-size:12.5px;line-height:16px;-webkit-text-stroke:0.22px #fff;color:#fff;transform:translateX(-50%) scaleX(0.9388);transform-origin:50% 50%;">Create</span>
<div class="a" style="left:1774px;top:269px;width:65px;height:25px;background:#e9585e;border-radius:3px;"></div>
<span class="t" style="left:1806.5px;top:274.5px;font-size:12.5px;line-height:16px;-webkit-text-stroke:0.22px #fff;color:#fff;transform:translateX(-50%) scaleX(0.9265);transform-origin:50% 50%;">Clear</span>
<div class="a" style="left:246px;top:319px;width:1665px;height:601px;background:#fff;border:1px solid #ababab;"></div>
<div class="a" style="left:247px;top:320px;width:1646.5px;height:30.4px;background:#d5d5d5;"></div>
<div class="a" style="left:1594px;top:320px;width:1px;height:30.4px;background:#f4f4f4;"></div>
<span class="t" style="left:259.0px;top:327.0px;font-size:13px;line-height:17px;font-weight:700;color:#000;transform:scaleX(1.0468);transform-origin:0 50%;">Department/Sub Department</span>
<span class="t" style="left:1607.0px;top:327.0px;font-size:13px;line-height:17px;font-weight:700;color:#000;transform:scaleX(1.0164);transform-origin:0 50%;">Enable/Disable</span>
<div class="a" style="left:247px;top:350.4px;width:1646.5px;height:40.4px;background:#b9d8ef;"></div>
<div class="a" style="left:1893px;top:320px;width:1px;height:599px;background:#dcdcdc;"></div>
<div class="a" style="left:1899px;top:321px;width:6.5px;height:114px;background:#b4b4b4;border-radius:3.2px;"></div>
<div class="a" style="left:247px;top:320px;width:1646px;height:599px;overflow:hidden">
<div class="a" style="left:508px;top:30.399999999999977px;width:1px;height:570px;background:#dedede;"></div>
<div class="a" style="left:808px;top:30.399999999999977px;width:1px;height:570px;background:#dedede;"></div>
<div class="a" style="left:1047px;top:30.399999999999977px;width:1px;height:570px;background:#dedede;"></div>
<div class="a" style="left:1347px;top:30.399999999999977px;width:1px;height:570px;background:#dedede;"></div>
<div class="a" style="left:508px;top:30.399999999999977px;width:1px;height:40.4px;background:#c6dff0;"></div>
<div class="a" style="left:808px;top:30.399999999999977px;width:1px;height:40.4px;background:#c6dff0;"></div>
<div class="a" style="left:1047px;top:30.399999999999977px;width:1px;height:40.4px;background:#c6dff0;"></div>
<div class="a" style="left:1347px;top:30.399999999999977px;width:1px;height:40.4px;background:#c6dff0;"></div>
</div>
<svg class="a" style="left:254.3px;top:367.0px;" width="7" height="7" viewBox="0 0 7 7"><path d="M6.6 0 V6.6 H0 Z" fill="#222"/></svg>
<div class="a" style="left:284px;top:353.2px;width:35px;height:35px;background:#2d2926;"></div>
<svg class="a" style="left:278.0px;top:350.0px" width="1" height="1"><g transform="scale(0.038126)" fill="none" stroke="#fff" stroke-linecap="round" stroke-linejoin="round"><path d="M440 262 V760" stroke-width="86"/><path d="M482 282 L610 405 L482 540" stroke-width="50"/><path d="M730 830 Q400 850 312 772 Q282 700 420 670 Q560 650 640 610 Q800 560 870 640 Q950 760 900 800 Q850 842 782 842" stroke-width="46"/><ellipse cx="600" cy="750" rx="76" ry="38" fill="#fff" stroke="none"/></g></svg>
<span class="t" style="left:329.0px;top:358.5px;font-size:14px;line-height:18px;-webkit-text-stroke:0.12px #111;color:#111;transform:scaleX(0.9842);transform-origin:0 50%;">Golf</span>
<span class="t" style="left:299.3px;top:399.2px;font-size:14px;line-height:18px;-webkit-text-stroke:0.12px #111;color:#111;transform:scaleX(0.8429);transform-origin:0 50%;">RATES</span>
<div class="a" style="left:1303.3px;top:395.7px;width:59.3px;height:25px;background:#2d2926;border:1px solid #8a8886;border-radius:3px;"></div>
<span class="t" style="left:1333.0px;top:400.2px;font-size:12px;line-height:16px;-webkit-text-stroke:0.22px #fff;color:#fff;transform:translateX(-50%) scaleX(0.9558);transform-origin:50% 50%;">Edit</span>
<div class="a" style="left:1635px;top:393.7px;width:58px;height:29px;background:#fff;border:1px solid #d2d2d2;border-radius:5px;"></div>
<div class="a" style="left:1664px;top:393.7px;width:29px;height:29px;background:#007040;border-radius:0 5px 5px 0;"></div>
<svg class="a" style="left:1635px;top:393.7px;" width="29" height="29" viewBox="0 0 29 29"><path d="M8.3 14.3 L13.2 19.2 L22.6 9.8" fill="none" stroke="#007040" stroke-width="1.90"/></svg>
<svg class="a" style="left:0;top:0" width="1" height="1"><path d="M1716.23 402.77 L1716.63 400.52 L1719.37 400.52 L1719.77 402.77 L1720.80 403.20 L1722.68 401.89 L1724.61 403.82 L1723.30 405.70 L1723.73 406.73 L1725.98 407.13 L1725.98 409.87 L1723.73 410.27 L1723.30 411.30 L1724.61 413.18 L1722.68 415.11 L1720.80 413.80 L1719.77 414.23 L1719.37 416.48 L1716.63 416.48 L1716.23 414.23 L1715.20 413.80 L1713.32 415.11 L1711.39 413.18 L1712.70 411.30 L1712.27 410.27 L1710.02 409.87 L1710.02 407.13 L1712.27 406.73 L1712.70 405.70 L1711.39 403.82 L1713.32 401.89 L1715.20 403.20 Z M1715.25 408.50 a2.75 2.75 0 1 0 5.5 0 a2.75 2.75 0 1 0 -5.5 0 Z" fill="#10143c" fill-rule="evenodd" stroke="#10143c" stroke-width="0.8" stroke-linejoin="round"/></svg>
<span class="t" style="left:299.3px;top:433.6px;font-size:14px;line-height:18px;-webkit-text-stroke:0.12px #111;color:#111;transform:scaleX(0.8965);transform-origin:0 50%;">Plays</span>
<div class="a" style="left:1303.3px;top:430.09999999999997px;width:59.3px;height:25px;background:#2d2926;border:1px solid #8a8886;border-radius:3px;"></div>
<span class="t" style="left:1333.0px;top:434.6px;font-size:12px;line-height:16px;-webkit-text-stroke:0.22px #fff;color:#fff;transform:translateX(-50%) scaleX(0.9558);transform-origin:50% 50%;">Edit</span>
<div class="a" style="left:1635px;top:428.09999999999997px;width:58px;height:29px;background:#fff;border:1px solid #d2d2d2;border-radius:5px;"></div>
<div class="a" style="left:1635px;top:428.09999999999997px;width:29.5px;height:29px;background:#d3d3d3;border-radius:5px 0 0 5px;"></div>
<svg class="a" style="left:1635px;top:428.09999999999997px;" width="58" height="29" viewBox="0 0 58 29"><path d="M38.9 9.9 L48.1 19.1 M48.1 9.9 L38.9 19.1" fill="none" stroke="#d2d2d2" stroke-width="1.7"/></svg>
<svg class="a" style="left:0;top:0" width="1" height="1"><path d="M1716.23 437.17 L1716.63 434.92 L1719.37 434.92 L1719.77 437.17 L1720.80 437.60 L1722.68 436.29 L1724.61 438.22 L1723.30 440.10 L1723.73 441.13 L1725.98 441.53 L1725.98 444.27 L1723.73 444.67 L1723.30 445.70 L1724.61 447.58 L1722.68 449.51 L1720.80 448.20 L1719.77 448.63 L1719.37 450.88 L1716.63 450.88 L1716.23 448.63 L1715.20 448.20 L1713.32 449.51 L1711.39 447.58 L1712.70 445.70 L1712.27 444.67 L1710.02 444.27 L1710.02 441.53 L1712.27 441.13 L1712.70 440.10 L1711.39 438.22 L1713.32 436.29 L1715.20 437.60 Z M1715.25 442.90 a2.75 2.75 0 1 0 5.5 0 a2.75 2.75 0 1 0 -5.5 0 Z" fill="#10143c" fill-rule="evenodd" stroke="#10143c" stroke-width="0.8" stroke-linejoin="round"/></svg>
<span class="t" style="left:299.3px;top:468.0px;font-size:14px;line-height:18px;-webkit-text-stroke:0.12px #111;color:#111;transform:scaleX(0.9127);transform-origin:0 50%;">Green Fees</span>
<div class="a" style="left:1303.3px;top:464.5px;width:59.3px;height:25px;background:#2d2926;border:1px solid #8a8886;border-radius:3px;"></div>
<span class="t" style="left:1333.0px;top:469.0px;font-size:12px;line-height:16px;-webkit-text-stroke:0.22px #fff;color:#fff;transform:translateX(-50%) scaleX(0.9558);transform-origin:50% 50%;">Edit</span>
<div class="a" style="left:1635px;top:462.5px;width:58px;height:29px;background:#fff;border:1px solid #d2d2d2;border-radius:5px;"></div>
<div class="a" style="left:1664px;top:462.5px;width:29px;height:29px;background:#007040;border-radius:0 5px 5px 0;"></div>
<svg class="a" style="left:1635px;top:462.5px;" width="29" height="29" viewBox="0 0 29 29"><path d="M8.3 14.3 L13.2 19.2 L22.6 9.8" fill="none" stroke="#007040" stroke-width="1.90"/></svg>
<svg class="a" style="left:0;top:0" width="1" height="1"><path d="M1716.23 471.57 L1716.63 469.32 L1719.37 469.32 L1719.77 471.57 L1720.80 472.00 L1722.68 470.69 L1724.61 472.62 L1723.30 474.50 L1723.73 475.53 L1725.98 475.93 L1725.98 478.67 L1723.73 479.07 L1723.30 480.10 L1724.61 481.98 L1722.68 483.91 L1720.80 482.60 L1719.77 483.03 L1719.37 485.28 L1716.63 485.28 L1716.23 483.03 L1715.20 482.60 L1713.32 483.91 L1711.39 481.98 L1712.70 480.10 L1712.27 479.07 L1710.02 478.67 L1710.02 475.93 L1712.27 475.53 L1712.70 474.50 L1711.39 472.62 L1713.32 470.69 L1715.20 472.00 Z M1715.25 477.30 a2.75 2.75 0 1 0 5.5 0 a2.75 2.75 0 1 0 -5.5 0 Z" fill="#10143c" fill-rule="evenodd" stroke="#10143c" stroke-width="0.8" stroke-linejoin="round"/></svg>
<span class="t" style="left:299.3px;top:502.4px;font-size:14px;line-height:18px;-webkit-text-stroke:0.12px #111;color:#111;transform:scaleX(0.9127);transform-origin:0 50%;">Green Fees</span>
<div class="a" style="left:1303.3px;top:498.9px;width:59.3px;height:25px;background:#2d2926;border:1px solid #8a8886;border-radius:3px;"></div>
<span class="t" style="left:1333.0px;top:503.4px;font-size:12px;line-height:16px;-webkit-text-stroke:0.22px #fff;color:#fff;transform:translateX(-50%) scaleX(0.9558);transform-origin:50% 50%;">Edit</span>
<div class="a" style="left:1635px;top:496.9px;width:58px;height:29px;background:#fff;border:1px solid #d2d2d2;border-radius:5px;"></div>
<div class="a" style="left:1664px;top:496.9px;width:29px;height:29px;background:#007040;border-radius:0 5px 5px 0;"></div>
<svg class="a" style="left:1635px;top:496.9px;" width="29" height="29" viewBox="0 0 29 29"><path d="M8.3 14.3 L13.2 19.2 L22.6 9.8" fill="none" stroke="#007040" stroke-width="1.90"/></svg>
<svg class="a" style="left:0;top:0" width="1" height="1"><path d="M1716.23 505.97 L1716.63 503.72 L1719.37 503.72 L1719.77 505.97 L1720.80 506.40 L1722.68 505.09 L1724.61 507.02 L1723.30 508.90 L1723.73 509.93 L1725.98 510.33 L1725.98 513.07 L1723.73 513.47 L1723.30 514.50 L1724.61 516.38 L1722.68 518.31 L1720.80 517.00 L1719.77 517.43 L1719.37 519.68 L1716.63 519.68 L1716.23 517.43 L1715.20 517.00 L1713.32 518.31 L1711.39 516.38 L1712.70 514.50 L1712.27 513.47 L1710.02 513.07 L1710.02 510.33 L1712.27 509.93 L1712.70 508.90 L1711.39 507.02 L1713.32 505.09 L1715.20 506.40 Z M1715.25 511.70 a2.75 2.75 0 1 0 5.5 0 a2.75 2.75 0 1 0 -5.5 0 Z" fill="#10143c" fill-rule="evenodd" stroke="#10143c" stroke-width="0.8" stroke-linejoin="round"/></svg>
<span class="t" style="left:299.3px;top:536.8px;font-size:14px;line-height:18px;-webkit-text-stroke:0.12px #111;color:#111;transform:scaleX(0.9087);transform-origin:0 50%;">Cart Fees</span>
<div class="a" style="left:1303.3px;top:533.3px;width:59.3px;height:25px;background:#2d2926;border:1px solid #8a8886;border-radius:3px;"></div>
<span class="t" style="left:1333.0px;top:537.8px;font-size:12px;line-height:16px;-webkit-text-stroke:0.22px #fff;color:#fff;transform:translateX(-50%) scaleX(0.9558);transform-origin:50% 50%;">Edit</span>
<div class="a" style="left:1635px;top:531.3px;width:58px;height:29px;background:#fff;border:1px solid #d2d2d2;border-radius:5px;"></div>
<div class="a" style="left:1664px;top:531.3px;width:29px;height:29px;background:#007040;border-radius:0 5px 5px 0;"></div>
<svg class="a" style="left:1635px;top:531.3px;" width="29" height="29" viewBox="0 0 29 29"><path d="M8.3 14.3 L13.2 19.2 L22.6 9.8" fill="none" stroke="#007040" stroke-width="1.90"/></svg>
<svg class="a" style="left:0;top:0" width="1" height="1"><path d="M1716.23 540.37 L1716.63 538.12 L1719.37 538.12 L1719.77 540.37 L1720.80 540.80 L1722.68 539.49 L1724.61 541.42 L1723.30 543.30 L1723.73 544.33 L1725.98 544.73 L1725.98 547.47 L1723.73 547.87 L1723.30 548.90 L1724.61 550.78 L1722.68 552.71 L1720.80 551.40 L1719.77 551.83 L1719.37 554.08 L1716.63 554.08 L1716.23 551.83 L1715.20 551.40 L1713.32 552.71 L1711.39 550.78 L1712.70 548.90 L1712.27 547.87 L1710.02 547.47 L1710.02 544.73 L1712.27 544.33 L1712.70 543.30 L1711.39 541.42 L1713.32 539.49 L1715.20 540.80 Z M1715.25 546.10 a2.75 2.75 0 1 0 5.5 0 a2.75 2.75 0 1 0 -5.5 0 Z" fill="#10143c" fill-rule="evenodd" stroke="#10143c" stroke-width="0.8" stroke-linejoin="round"/></svg>
<span class="t" style="left:299.3px;top:571.2px;font-size:14px;line-height:18px;-webkit-text-stroke:0.12px #111;color:#111;transform:scaleX(0.9647);transform-origin:0 50%;">Driving Range</span>
<div class="a" style="left:1303.3px;top:567.7px;width:59.3px;height:25px;background:#2d2926;border:1px solid #8a8886;border-radius:3px;"></div>
<span class="t" style="left:1333.0px;top:572.2px;font-size:12px;line-height:16px;-webkit-text-stroke:0.22px #fff;color:#fff;transform:translateX(-50%) scaleX(0.9558);transform-origin:50% 50%;">Edit</span>
<div class="a" style="left:1635px;top:565.7px;width:58px;height:29px;background:#fff;border:1px solid #d2d2d2;border-radius:5px;"></div>
<div class="a" style="left:1664px;top:565.7px;width:29px;height:29px;background:#007040;border-radius:0 5px 5px 0;"></div>
<svg class="a" style="left:1635px;top:565.7px;" width="29" height="29" viewBox="0 0 29 29"><path d="M8.3 14.3 L13.2 19.2 L22.6 9.8" fill="none" stroke="#007040" stroke-width="1.90"/></svg>
<svg class="a" style="left:0;top:0" width="1" height="1"><path d="M1716.23 574.77 L1716.63 572.52 L1719.37 572.52 L1719.77 574.77 L1720.80 575.20 L1722.68 573.89 L1724.61 575.82 L1723.30 577.70 L1723.73 578.73 L1725.98 579.13 L1725.98 581.87 L1723.73 582.27 L1723.30 583.30 L1724.61 585.18 L1722.68 587.11 L1720.80 585.80 L1719.77 586.23 L1719.37 588.48 L1716.63 588.48 L1716.23 586.23 L1715.20 585.80 L1713.32 587.11 L1711.39 585.18 L1712.70 583.30 L1712.27 582.27 L1710.02 581.87 L1710.02 579.13 L1712.27 578.73 L1712.70 577.70 L1711.39 575.82 L1713.32 573.89 L1715.20 575.20 Z M1715.25 580.50 a2.75 2.75 0 1 0 5.5 0 a2.75 2.75 0 1 0 -5.5 0 Z" fill="#10143c" fill-rule="evenodd" stroke="#10143c" stroke-width="0.8" stroke-linejoin="round"/></svg>
<span class="t" style="left:299.3px;top:605.6px;font-size:14px;line-height:18px;-webkit-text-stroke:0.12px #111;color:#111;transform:scaleX(0.9064);transform-origin:0 50%;">Lessons</span>
<div class="a" style="left:1303.3px;top:602.0999999999999px;width:59.3px;height:25px;background:#2d2926;border:1px solid #8a8886;border-radius:3px;"></div>
<span class="t" style="left:1333.0px;top:606.6px;font-size:12px;line-height:16px;-webkit-text-stroke:0.22px #fff;color:#fff;transform:translateX(-50%) scaleX(0.9558);transform-origin:50% 50%;">Edit</span>
<div class="a" style="left:1635px;top:600.0999999999999px;width:58px;height:29px;background:#fff;border:1px solid #d2d2d2;border-radius:5px;"></div>
<div class="a" style="left:1664px;top:600.0999999999999px;width:29px;height:29px;background:#007040;border-radius:0 5px 5px 0;"></div>
<svg class="a" style="left:1635px;top:600.0999999999999px;" width="29" height="29" viewBox="0 0 29 29"><path d="M8.3 14.3 L13.2 19.2 L22.6 9.8" fill="none" stroke="#007040" stroke-width="1.90"/></svg>
<svg class="a" style="left:0;top:0" width="1" height="1"><path d="M1716.23 609.17 L1716.63 606.92 L1719.37 606.92 L1719.77 609.17 L1720.80 609.60 L1722.68 608.29 L1724.61 610.22 L1723.30 612.10 L1723.73 613.13 L1725.98 613.53 L1725.98 616.27 L1723.73 616.67 L1723.30 617.70 L1724.61 619.58 L1722.68 621.51 L1720.80 620.20 L1719.77 620.63 L1719.37 622.88 L1716.63 622.88 L1716.23 620.63 L1715.20 620.20 L1713.32 621.51 L1711.39 619.58 L1712.70 617.70 L1712.27 616.67 L1710.02 616.27 L1710.02 613.53 L1712.27 613.13 L1712.70 612.10 L1711.39 610.22 L1713.32 608.29 L1715.20 609.60 Z M1715.25 614.90 a2.75 2.75 0 1 0 5.5 0 a2.75 2.75 0 1 0 -5.5 0 Z" fill="#10143c" fill-rule="evenodd" stroke="#10143c" stroke-width="0.8" stroke-linejoin="round"/></svg>
<span class="t" style="left:299.3px;top:640.0px;font-size:14px;line-height:18px;-webkit-text-stroke:0.12px #111;color:#111;transform:scaleX(0.9792);transform-origin:0 50%;">Memberships</span>
<div class="a" style="left:1303.3px;top:636.5px;width:59.3px;height:25px;background:#2d2926;border:1px solid #8a8886;border-radius:3px;"></div>
<span class="t" style="left:1333.0px;top:641.0px;font-size:12px;line-height:16px;-webkit-text-stroke:0.22px #fff;color:#fff;transform:translateX(-50%) scaleX(0.9558);transform-origin:50% 50%;">Edit</span>
<div class="a" style="left:1635px;top:634.5px;width:58px;height:29px;background:#fff;border:1px solid #d2d2d2;border-radius:5px;"></div>
<div class="a" style="left:1664px;top:634.5px;width:29px;height:29px;background:#007040;border-radius:0 5px 5px 0;"></div>
<svg class="a" style="left:1635px;top:634.5px;" width="29" height="29" viewBox="0 0 29 29"><path d="M8.3 14.3 L13.2 19.2 L22.6 9.8" fill="none" stroke="#007040" stroke-width="1.90"/></svg>
<svg class="a" style="left:0;top:0" width="1" height="1"><path d="M1716.23 643.57 L1716.63 641.32 L1719.37 641.32 L1719.77 643.57 L1720.80 644.00 L1722.68 642.69 L1724.61 644.62 L1723.30 646.50 L1723.73 647.53 L1725.98 647.93 L1725.98 650.67 L1723.73 651.07 L1723.30 652.10 L1724.61 653.98 L1722.68 655.91 L1720.80 654.60 L1719.77 655.03 L1719.37 657.28 L1716.63 657.28 L1716.23 655.03 L1715.20 654.60 L1713.32 655.91 L1711.39 653.98 L1712.70 652.10 L1712.27 651.07 L1710.02 650.67 L1710.02 647.93 L1712.27 647.53 L1712.70 646.50 L1711.39 644.62 L1713.32 642.69 L1715.20 644.00 Z M1715.25 649.30 a2.75 2.75 0 1 0 5.5 0 a2.75 2.75 0 1 0 -5.5 0 Z" fill="#10143c" fill-rule="evenodd" stroke="#10143c" stroke-width="0.8" stroke-linejoin="round"/></svg>
<span class="t" style="left:299.3px;top:674.4px;font-size:14px;line-height:18px;-webkit-text-stroke:0.12px #111;color:#111;transform:scaleX(0.9859);transform-origin:0 50%;">Simulator</span>
<span class="t" style="left:766.0px;top:674.4px;font-size:14px;line-height:18px;-webkit-text-stroke:0.12px #111;color:#111;transform:scaleX(0.9345);transform-origin:0 50%;">5 - Driving Range Revenue</span>
<span class="t" style="left:1066.0px;top:674.7px;font-size:14px;line-height:18px;-webkit-text-stroke:0.12px #111;color:#111;transform:scaleX(0.9575);transform-origin:0 50%;">16</span>
<div class="a" style="left:1303.3px;top:670.9px;width:59.3px;height:25px;background:#2d2926;border:1px solid #8a8886;border-radius:3px;"></div>
<span class="t" style="left:1333.0px;top:675.4px;font-size:12px;line-height:16px;-webkit-text-stroke:0.22px #fff;color:#fff;transform:translateX(-50%) scaleX(0.9558);transform-origin:50% 50%;">Edit</span>
<div class="a" style="left:1635px;top:668.9px;width:58px;height:29px;background:#fff;border:1px solid #d2d2d2;border-radius:5px;"></div>
<div class="a" style="left:1635px;top:668.9px;width:29.5px;height:29px;background:#d3d3d3;border-radius:5px 0 0 5px;"></div>
<svg class="a" style="left:1635px;top:668.9px;" width="58" height="29" viewBox="0 0 58 29"><path d="M38.9 9.9 L48.1 19.1 M48.1 9.9 L38.9 19.1" fill="none" stroke="#d2d2d2" stroke-width="1.7"/></svg>
<svg class="a" style="left:0;top:0" width="1" height="1"><path d="M1716.23 677.97 L1716.63 675.72 L1719.37 675.72 L1719.77 677.97 L1720.80 678.40 L1722.68 677.09 L1724.61 679.02 L1723.30 680.90 L1723.73 681.93 L1725.98 682.33 L1725.98 685.07 L1723.73 685.47 L1723.30 686.50 L1724.61 688.38 L1722.68 690.31 L1720.80 689.00 L1719.77 689.43 L1719.37 691.68 L1716.63 691.68 L1716.23 689.43 L1715.20 689.00 L1713.32 690.31 L1711.39 688.38 L1712.70 686.50 L1712.27 685.47 L1710.02 685.07 L1710.02 682.33 L1712.27 681.93 L1712.70 680.90 L1711.39 679.02 L1713.32 677.09 L1715.20 678.40 Z M1715.25 683.70 a2.75 2.75 0 1 0 5.5 0 a2.75 2.75 0 1 0 -5.5 0 Z" fill="#10143c" fill-rule="evenodd" stroke="#10143c" stroke-width="0.8" stroke-linejoin="round"/></svg>
<span class="t" style="left:299.3px;top:708.8px;font-size:14px;line-height:18px;-webkit-text-stroke:0.12px #111;color:#111;transform:scaleX(0.8862);transform-origin:0 50%;">GF+CF</span>
<span class="t" style="left:766.0px;top:708.8px;font-size:14px;line-height:18px;-webkit-text-stroke:0.12px #111;color:#111;transform:scaleX(0.9098);transform-origin:0 50%;">7 - Green Fees</span>
<span class="t" style="left:1066.0px;top:709.1px;font-size:14px;line-height:18px;-webkit-text-stroke:0.12px #111;color:#111;transform:scaleX(0.9575);transform-origin:0 50%;">18</span>
<div class="a" style="left:1303.3px;top:705.3px;width:59.3px;height:25px;background:#2d2926;border:1px solid #8a8886;border-radius:3px;"></div>
<span class="t" style="left:1333.0px;top:709.8px;font-size:12px;line-height:16px;-webkit-text-stroke:0.22px #fff;color:#fff;transform:translateX(-50%) scaleX(0.9558);transform-origin:50% 50%;">Edit</span>
<div class="a" style="left:1635px;top:703.3px;width:58px;height:29px;background:#fff;border:1px solid #d2d2d2;border-radius:5px;"></div>
<div class="a" style="left:1664px;top:703.3px;width:29px;height:29px;background:#007040;border-radius:0 5px 5px 0;"></div>
<svg class="a" style="left:1635px;top:703.3px;" width="29" height="29" viewBox="0 0 29 29"><path d="M8.3 14.3 L13.2 19.2 L22.6 9.8" fill="none" stroke="#007040" stroke-width="1.90"/></svg>
<svg class="a" style="left:0;top:0" width="1" height="1"><path d="M1716.23 712.37 L1716.63 710.12 L1719.37 710.12 L1719.77 712.37 L1720.80 712.80 L1722.68 711.49 L1724.61 713.42 L1723.30 715.30 L1723.73 716.33 L1725.98 716.73 L1725.98 719.47 L1723.73 719.87 L1723.30 720.90 L1724.61 722.78 L1722.68 724.71 L1720.80 723.40 L1719.77 723.83 L1719.37 726.08 L1716.63 726.08 L1716.23 723.83 L1715.20 723.40 L1713.32 724.71 L1711.39 722.78 L1712.70 720.90 L1712.27 719.87 L1710.02 719.47 L1710.02 716.73 L1712.27 716.33 L1712.70 715.30 L1711.39 713.42 L1713.32 711.49 L1715.20 712.80 Z M1715.25 718.10 a2.75 2.75 0 1 0 5.5 0 a2.75 2.75 0 1 0 -5.5 0 Z" fill="#10143c" fill-rule="evenodd" stroke="#10143c" stroke-width="0.8" stroke-linejoin="round"/></svg>
<span class="t" style="left:299.3px;top:743.2px;font-size:14px;line-height:18px;-webkit-text-stroke:0.12px #111;color:#111;transform:scaleX(0.9445);transform-origin:0 50%;">Golf Balls</span>
<span class="t" style="left:766.0px;top:743.2px;font-size:14px;line-height:18px;-webkit-text-stroke:0.12px #111;color:#111;transform:scaleX(0.9347);transform-origin:0 50%;">11 - Merchandise Sales</span>
<span class="t" style="left:1066.0px;top:743.5px;font-size:14px;line-height:18px;-webkit-text-stroke:0.12px #111;color:#111;transform:scaleX(0.9575);transform-origin:0 50%;">19</span>
<div class="a" style="left:1303.3px;top:739.7px;width:59.3px;height:25px;background:#2d2926;border:1px solid #8a8886;border-radius:3px;"></div>
<span class="t" style="left:1333.0px;top:744.2px;font-size:12px;line-height:16px;-webkit-text-stroke:0.22px #fff;color:#fff;transform:translateX(-50%) scaleX(0.9558);transform-origin:50% 50%;">Edit</span>
<div class="a" style="left:1635px;top:737.7px;width:58px;height:29px;background:#fff;border:1px solid #d2d2d2;border-radius:5px;"></div>
<div class="a" style="left:1635px;top:737.7px;width:29.5px;height:29px;background:#d3d3d3;border-radius:5px 0 0 5px;"></div>
<svg class="a" style="left:1635px;top:737.7px;" width="58" height="29" viewBox="0 0 58 29"><path d="M38.9 9.9 L48.1 19.1 M48.1 9.9 L38.9 19.1" fill="none" stroke="#d2d2d2" stroke-width="1.7"/></svg>
<svg class="a" style="left:0;top:0" width="1" height="1"><path d="M1716.23 746.77 L1716.63 744.52 L1719.37 744.52 L1719.77 746.77 L1720.80 747.20 L1722.68 745.89 L1724.61 747.82 L1723.30 749.70 L1723.73 750.73 L1725.98 751.13 L1725.98 753.87 L1723.73 754.27 L1723.30 755.30 L1724.61 757.18 L1722.68 759.11 L1720.80 757.80 L1719.77 758.23 L1719.37 760.48 L1716.63 760.48 L1716.23 758.23 L1715.20 757.80 L1713.32 759.11 L1711.39 757.18 L1712.70 755.30 L1712.27 754.27 L1710.02 753.87 L1710.02 751.13 L1712.27 750.73 L1712.70 749.70 L1711.39 747.82 L1713.32 745.89 L1715.20 747.20 Z M1715.25 752.50 a2.75 2.75 0 1 0 5.5 0 a2.75 2.75 0 1 0 -5.5 0 Z" fill="#10143c" fill-rule="evenodd" stroke="#10143c" stroke-width="0.8" stroke-linejoin="round"/></svg>
<svg class="a" style="left:254.3px;top:785.8px;" width="7" height="7" viewBox="0 0 7 7"><path d="M6.6 0 V6.6 H0 Z" fill="#222"/></svg>
<div class="a" style="left:284px;top:772.0px;width:35px;height:35px;background:#2d2926;"></div>
<svg class="a" style="left:278.0px;top:768.0px" width="1" height="1"><g transform="scale(0.038126)" fill="none" stroke="#fff" stroke-linecap="round" stroke-linejoin="round"><path d="M600 440 H890" stroke-width="76"/><path d="M622 470 L682 875 H850 L888 470" stroke-width="44"/><path d="M870 252 Q752 310 745 392 M730 480 Q700 562 742 640 Q822 730 792 800 Q782 842 760 862" stroke-width="44"/><path d="M852 480 L822 860" stroke-width="28" stroke="#ddd"/><path d="M345 758 Q335 650 470 640 H625 M340 762 Q312 800 332 830 Q322 882 382 886 H850" stroke-width="46"/><path d="M372 752 H625" stroke-width="30"/><path d="M372 802 H640 M352 850 H650" stroke="#c9c9c9" stroke-width="28"/></g></svg>
<span class="t" style="left:329.0px;top:777.0px;font-size:14px;line-height:18px;-webkit-text-stroke:0.12px #111;color:#111;transform:scaleX(0.9683);transform-origin:0 50%;">Kitchen</span>
<span class="t" style="left:1066.0px;top:780.3px;font-size:14px;line-height:18px;-webkit-text-stroke:0.12px #111;color:#111;transform:scaleX(0.9575);transform-origin:0 50%;">0</span>
<div class="a" style="left:1303.3px;top:776.5px;width:59.3px;height:25px;background:#2d2926;border:1px solid #8a8886;border-radius:3px;"></div>
<span class="t" style="left:1333.0px;top:781.0px;font-size:12px;line-height:16px;-webkit-text-stroke:0.22px #fff;color:#fff;transform:translateX(-50%) scaleX(0.9558);transform-origin:50% 50%;">Edit</span>
<span class="t" style="left:299.3px;top:818.2px;font-size:14px;line-height:18px;-webkit-text-stroke:0.12px #111;color:#111;transform:scaleX(0.9005);transform-origin:0 50%;">Snacks</span>
<span class="t" style="left:766.0px;top:818.2px;font-size:14px;line-height:18px;-webkit-text-stroke:0.12px #111;color:#111;transform:scaleX(0.9859);transform-origin:0 50%;">1110 - kitchen</span>
<span class="t" style="left:1066.0px;top:818.5px;font-size:14px;line-height:18px;-webkit-text-stroke:0.12px #111;color:#111;transform:scaleX(0.9575);transform-origin:0 50%;">1</span>
<div class="a" style="left:1303.3px;top:814.7px;width:59.3px;height:25px;background:#2d2926;border:1px solid #8a8886;border-radius:3px;"></div>
<span class="t" style="left:1333.0px;top:819.2px;font-size:12px;line-height:16px;-webkit-text-stroke:0.22px #fff;color:#fff;transform:translateX(-50%) scaleX(0.9558);transform-origin:50% 50%;">Edit</span>
<div class="a" style="left:1635px;top:812.7px;width:58px;height:29px;background:#fff;border:1px solid #d2d2d2;border-radius:5px;"></div>
<div class="a" style="left:1664px;top:812.7px;width:29px;height:29px;background:#007040;border-radius:0 5px 5px 0;"></div>
<svg class="a" style="left:1635px;top:812.7px;" width="29" height="29" viewBox="0 0 29 29"><path d="M8.3 14.3 L13.2 19.2 L22.6 9.8" fill="none" stroke="#007040" stroke-width="1.90"/></svg>
<svg class="a" style="left:0;top:0" width="1" height="1"><path d="M1716.23 821.77 L1716.63 819.52 L1719.37 819.52 L1719.77 821.77 L1720.80 822.20 L1722.68 820.89 L1724.61 822.82 L1723.30 824.70 L1723.73 825.73 L1725.98 826.13 L1725.98 828.87 L1723.73 829.27 L1723.30 830.30 L1724.61 832.18 L1722.68 834.11 L1720.80 832.80 L1719.77 833.23 L1719.37 835.48 L1716.63 835.48 L1716.23 833.23 L1715.20 832.80 L1713.32 834.11 L1711.39 832.18 L1712.70 830.30 L1712.27 829.27 L1710.02 828.87 L1710.02 826.13 L1712.27 825.73 L1712.70 824.70 L1711.39 822.82 L1713.32 820.89 L1715.20 822.20 Z M1715.25 827.50 a2.75 2.75 0 1 0 5.5 0 a2.75 2.75 0 1 0 -5.5 0 Z" fill="#10143c" fill-rule="evenodd" stroke="#10143c" stroke-width="0.8" stroke-linejoin="round"/></svg>
<span class="t" style="left:299.3px;top:852.6px;font-size:14px;line-height:18px;-webkit-text-stroke:0.12px #111;color:#111;transform:scaleX(0.9550);transform-origin:0 50%;">Drinks</span>
<span class="t" style="left:766.0px;top:852.6px;font-size:14px;line-height:18px;-webkit-text-stroke:0.12px #111;color:#111;transform:scaleX(0.9653);transform-origin:0 50%;">402110 - Food - Income</span>
<span class="t" style="left:1066.0px;top:852.9px;font-size:14px;line-height:18px;-webkit-text-stroke:0.12px #111;color:#111;transform:scaleX(0.9575);transform-origin:0 50%;">2</span>
<div class="a" style="left:1303.3px;top:849.1px;width:59.3px;height:25px;background:#2d2926;border:1px solid #8a8886;border-radius:3px;"></div>
<span class="t" style="left:1333.0px;top:853.6px;font-size:12px;line-height:16px;-webkit-text-stroke:0.22px #fff;color:#fff;transform:translateX(-50%) scaleX(0.9558);transform-origin:50% 50%;">Edit</span>
<div class="a" style="left:1635px;top:847.1px;width:58px;height:29px;background:#fff;border:1px solid #d2d2d2;border-radius:5px;"></div>
<div class="a" style="left:1664px;top:847.1px;width:29px;height:29px;background:#007040;border-radius:0 5px 5px 0;"></div>
<svg class="a" style="left:1635px;top:847.1px;" width="29" height="29" viewBox="0 0 29 29"><path d="M8.3 14.3 L13.2 19.2 L22.6 9.8" fill="none" stroke="#007040" stroke-width="1.90"/></svg>
<svg class="a" style="left:0;top:0" width="1" height="1"><path d="M1716.23 856.17 L1716.63 853.92 L1719.37 853.92 L1719.77 856.17 L1720.80 856.60 L1722.68 855.29 L1724.61 857.22 L1723.30 859.10 L1723.73 860.13 L1725.98 860.53 L1725.98 863.27 L1723.73 863.67 L1723.30 864.70 L1724.61 866.58 L1722.68 868.51 L1720.80 867.20 L1719.77 867.63 L1719.37 869.88 L1716.63 869.88 L1716.23 867.63 L1715.20 867.20 L1713.32 868.51 L1711.39 866.58 L1712.70 864.70 L1712.27 863.67 L1710.02 863.27 L1710.02 860.53 L1712.27 860.13 L1712.70 859.10 L1711.39 857.22 L1713.32 855.29 L1715.20 856.60 Z M1715.25 861.90 a2.75 2.75 0 1 0 5.5 0 a2.75 2.75 0 1 0 -5.5 0 Z" fill="#10143c" fill-rule="evenodd" stroke="#10143c" stroke-width="0.8" stroke-linejoin="round"/></svg>
<span class="t" style="left:299.3px;top:887.0px;font-size:14px;line-height:18px;-webkit-text-stroke:0.12px #111;color:#111;transform:scaleX(0.9748);transform-origin:0 50%;">Food</span>
<span class="t" style="left:766.0px;top:887.0px;font-size:14px;line-height:18px;-webkit-text-stroke:0.12px #111;color:#111;transform:scaleX(0.9062);transform-origin:0 50%;">3-41500 - GRILL FOOD</span>
<span class="t" style="left:1066.0px;top:887.3px;font-size:14px;line-height:18px;-webkit-text-stroke:0.12px #111;color:#111;transform:scaleX(0.9575);transform-origin:0 50%;">3</span>
<div class="a" style="left:1303.3px;top:883.5px;width:59.3px;height:25px;background:#2d2926;border:1px solid #8a8886;border-radius:3px;"></div>
<span class="t" style="left:1333.0px;top:888.0px;font-size:12px;line-height:16px;-webkit-text-stroke:0.22px #fff;color:#fff;transform:translateX(-50%) scaleX(0.9558);transform-origin:50% 50%;">Edit</span>
<div class="a" style="left:1635px;top:881.5px;width:58px;height:29px;background:#fff;border:1px solid #d2d2d2;border-radius:5px;"></div>
<div class="a" style="left:1664px;top:881.5px;width:29px;height:29px;background:#007040;border-radius:0 5px 5px 0;"></div>
<svg class="a" style="left:1635px;top:881.5px;" width="29" height="29" viewBox="0 0 29 29"><path d="M8.3 14.3 L13.2 19.2 L22.6 9.8" fill="none" stroke="#007040" stroke-width="1.90"/></svg>
<svg class="a" style="left:0;top:0" width="1" height="1"><path d="M1716.23 890.57 L1716.63 888.32 L1719.37 888.32 L1719.77 890.57 L1720.80 891.00 L1722.68 889.69 L1724.61 891.62 L1723.30 893.50 L1723.73 894.53 L1725.98 894.93 L1725.98 897.67 L1723.73 898.07 L1723.30 899.10 L1724.61 900.98 L1722.68 902.91 L1720.80 901.60 L1719.77 902.03 L1719.37 904.28 L1716.63 904.28 L1716.23 902.03 L1715.20 901.60 L1713.32 902.91 L1711.39 900.98 L1712.70 899.10 L1712.27 898.07 L1710.02 897.67 L1710.02 894.93 L1712.27 894.53 L1712.70 893.50 L1711.39 891.62 L1713.32 889.69 L1715.20 891.00 Z M1715.25 896.30 a2.75 2.75 0 1 0 5.5 0 a2.75 2.75 0 1 0 -5.5 0 Z" fill="#10143c" fill-rule="evenodd" stroke="#10143c" stroke-width="0.8" stroke-linejoin="round"/></svg>
<div class="a" style="left:247px;top:900px;width:1646px;height:19px;overflow:hidden">
<div class="a" style="left:1056.3px;top:17.7px;width:59.3px;height:25px;background:#2d2926;border:1px solid #8a8886;border-radius:3px;"></div>
<span class="t" style="left:1086.0px;top:22.2px;font-size:12px;line-height:16px;-webkit-text-stroke:0.22px #fff;color:#fff;transform:translateX(-50%) scaleX(0.9558);transform-origin:50% 50%;">Edit</span>
<div class="a" style="left:1388.0px;top:15.7px;width:58px;height:29px;background:#fff;border:1px solid #d2d2d2;border-radius:5px;"></div>
<div class="a" style="left:1417.0px;top:15.7px;width:29px;height:29px;background:#007040;border-radius:0 5px 5px 0;"></div>
<svg class="a" style="left:1388.0px;top:15.7px;" width="29" height="29" viewBox="0 0 29 29"><path d="M8.3 14.3 L13.2 19.2 L22.6 9.8" fill="none" stroke="#007040" stroke-width="1.90"/></svg>
</div>
<div class="a" style="left:567px;top:206px;width:796px;height:480px;background:#fff;box-shadow:-2px 2px 7px rgba(0,0,0,.22), 3px 3px 6px rgba(0,0,0,.25);"></div>
<div class="a" style="left:572px;top:211px;width:786px;height:470px;background:#fff;border:2px solid #8c8c8c;border-bottom:none;border-right:none;"></div>
<div class="a" style="left:574px;top:213px;width:784px;height:31px;background:#007040;"></div>
<span class="t" style="left:584.5px;top:219.2px;font-size:18px;line-height:23px;-webkit-text-stroke:0.22px #fff;color:#fff;transform:scaleX(0.8993);transform-origin:0 50%;">MANAGE CATEGORY</span>
<div class="a" style="left:1352px;top:244px;width:6px;height:437px;background:linear-gradient(90deg,rgba(0,0,0,0),rgba(0,0,0,.14));"></div>
<span class="t" style="left:594.5px;top:250.0px;font-size:12px;line-height:16px;-webkit-text-stroke:0.12px #1a1a1a;color:#1a1a1a;transform:scaleX(0.9909);transform-origin:0 50%;">Department</span>
<div class="a" style="left:594px;top:268.4px;width:143px;height:29px;background:#fff;border:1px solid #c9c9c9;"></div>
<span class="t" style="left:600.2px;top:275.7px;font-size:12px;line-height:16px;-webkit-text-stroke:0.12px #111;color:#111;transform:scaleX(0.9702);transform-origin:0 50%;">Test</span>
<svg class="a" style="left:720.5px;top:280.5px;" width="7" height="5" viewBox="0 0 7 5"><path d="M0 0 H6.4 L3.2 4.2 Z" fill="#333"/></svg>
<span class="t" style="left:747.0px;top:250.0px;font-size:12px;line-height:16px;-webkit-text-stroke:0.12px #1a1a1a;color:#1a1a1a;transform:scaleX(0.9767);transform-origin:0 50%;">Sub Department</span>
<div class="a" style="left:747px;top:268.4px;width:142.5px;height:29px;background:#fff;border:1px solid #c9c9c9;"></div>
<span class="t" style="left:753.2px;top:275.7px;font-size:12px;line-height:16px;-webkit-text-stroke:0.12px #111;color:#111;transform:scaleX(0.9771);transform-origin:0 50%;">Custom irons</span>
<svg class="a" style="left:873.0px;top:280.5px;" width="7" height="5" viewBox="0 0 7 5"><path d="M0 0 H6.4 L3.2 4.2 Z" fill="#333"/></svg>
<span class="t" style="left:899.8px;top:250.0px;font-size:12px;line-height:16px;-webkit-text-stroke:0.12px #1a1a1a;color:#1a1a1a;transform:scaleX(0.9710);transform-origin:0 50%;">Category</span>
<div class="a" style="left:899.5px;top:268.4px;width:143px;height:29px;background:#fff;border:1px solid #d3d3d3;border-radius:3px;"></div>
<span class="t" style="left:908.0px;top:276.0px;font-size:12px;line-height:16px;-webkit-text-stroke:0.12px #111;color:#111;transform:scaleX(0.9732);transform-origin:0 50%;">Irons</span>
<span class="t" style="left:1052.7px;top:250.0px;font-size:12px;line-height:16px;-webkit-text-stroke:0.12px #1a1a1a;color:#1a1a1a;transform:scaleX(0.9448);transform-origin:0 50%;">Display Sequence</span>
<div class="a" style="left:1052px;top:268.4px;width:120px;height:29px;background:#fff;border:1px solid #8c8c8c;"></div>
<span class="t" style="left:1148.3px;top:275.0px;font-size:13.5px;line-height:18px;-webkit-text-stroke:0.12px #111;color:#111;transform:translateX(-100%) scaleX(0.9575);transform-origin:100% 50%;">0</span>
<svg class="a" style="left:1161px;top:274px;" width="7" height="18" viewBox="0 0 7 18"><path d="M0.3 3.3 L3.2 0.3 L6.1 3.3 Z M0.3 13.7 L3.2 16.7 L6.1 13.7 Z" fill="#666"/></svg>
<span class="t" style="left:594.5px;top:309.8px;font-size:12px;line-height:16px;-webkit-text-stroke:0.12px #1a1a1a;color:#1a1a1a;transform:scaleX(0.9751);transform-origin:0 50%;">Account Name</span>
<div class="a" style="left:594px;top:328.4px;width:181px;height:29.4px;background:#fff;border:1px solid #c9c9c9;"></div>
<span class="t" style="left:600.2px;top:335.9px;font-size:12px;line-height:16px;-webkit-text-stroke:0.12px #111;color:#111;transform:scaleX(1.0074);transform-origin:0 50%;">-- Select --</span>
<svg class="a" style="left:758.5px;top:340.7px;" width="7" height="5" viewBox="0 0 7 5"><path d="M0 0 H6.4 L3.2 4.2 Z" fill="#333"/></svg>
<span class="t" style="left:785.0px;top:309.8px;font-size:12px;line-height:16px;-webkit-text-stroke:0.12px #1a1a1a;color:#1a1a1a;transform:scaleX(0.9603);transform-origin:0 50%;">Classification Name</span>
<div class="a" style="left:785px;top:328.4px;width:181px;height:29.4px;background:#fff;border:1px solid #c9c9c9;"></div>
<span class="t" style="left:791.2px;top:335.9px;font-size:12px;line-height:16px;-webkit-text-stroke:0.12px #111;color:#111;transform:scaleX(1.0074);transform-origin:0 50%;">-- Select --</span>
<svg class="a" style="left:949.5px;top:340.7px;" width="7" height="5" viewBox="0 0 7 5"><path d="M0 0 H6.4 L3.2 4.2 Z" fill="#333"/></svg>
<div class="a" style="left:986px;top:330.5px;width:22px;height:22px;background:#d5dadd;border-radius:3px;"></div>
<svg class="a" style="left:986px;top:330.5px;" width="22" height="22" viewBox="0 0 22 22"><path d="M5.2 11.3 L9.3 15.3 L16.8 6.6" fill="none" stroke="#fff" stroke-width="2.6"/></svg>
<span class="t" style="left:1013.3px;top:332.3px;font-size:16px;line-height:21px;color:#8b8b8b;transform:scaleX(0.9745);transform-origin:0 50%;">Quick book Sync</span>
<div class="a" style="left:1158px;top:325px;width:79px;height:27px;background:#262220;box-shadow:inset 0 0 4px rgba(0,0,0,.6);"></div>
<span class="t" style="left:1197.2px;top:329.0px;font-size:12px;line-height:16px;-webkit-text-stroke:0.22px #fff;color:#fff;transform:translateX(-50%) scaleX(0.9574);transform-origin:50% 50%;">Save Category</span>
<div class="a" style="left:1247px;top:321.5px;width:80px;height:30px;background:#2d2926;border-radius:3px;"></div>
<span class="t" style="left:1287.0px;top:329.0px;font-size:12px;line-height:16px;-webkit-text-stroke:0.22px #fff;color:#fff;transform:translateX(-50%) scaleX(0.9271);transform-origin:50% 50%;">Cancel</span>
<div class="a" style="left:574px;top:363.5px;width:784px;height:41px;background:#ececec;"></div>
<div class="a" style="left:584px;top:369.4px;width:150px;height:29.2px;background:#fff;border:1px solid #c9c9c9;"></div>
<span class="t" style="left:590.2px;top:376.8px;font-size:12px;line-height:16px;-webkit-text-stroke:0.12px #111;color:#111;transform:scaleX(0.9832);transform-origin:0 50%;">All</span>
<svg class="a" style="left:717.5px;top:381.6px;" width="7" height="5" viewBox="0 0 7 5"><path d="M0 0 H6.4 L3.2 4.2 Z" fill="#333"/></svg>
<div class="a" style="left:1078.5px;top:369.5px;width:269px;height:29.5px;background:#f4f4f4;border:1px solid #dcdcdc;border-radius:2px;"></div>
<div class="a" style="left:1079.5px;top:370.5px;width:180px;height:27.5px;background:#fff;"></div>
<span class="t" style="left:1084.5px;top:377.0px;font-size:12px;line-height:16px;color:#666;transform:scaleX(0.9481);transform-origin:0 50%;">Search Category</span>
<svg class="a" style="left:1231px;top:376px;" width="18" height="18" viewBox="0 0 18 18"><circle cx="6.6" cy="6.6" r="4.6" fill="none" stroke="#777" stroke-width="1.6"/><path d="M10 10 L15.3 15.3" stroke="#777" stroke-width="2.4" stroke-linecap="round"/></svg>
<div class="a" style="left:1265px;top:371.5px;width:80px;height:25px;background:#2d2926;border-radius:3px;"></div>
<span class="t" style="left:1305.0px;top:377.0px;font-size:12.5px;line-height:16px;-webkit-text-stroke:0.22px #fff;color:#fff;transform:translateX(-50%) scaleX(0.9265);transform-origin:50% 50%;">Clear</span>
<div class="a" style="left:584px;top:404px;width:764.5px;height:231px;background:#f0f0f0;border:1px solid #7f9dc4;"></div>
<div class="a" style="left:585px;top:405px;width:744.5px;height:29.8px;background:#878787;"></div>
<div class="a" style="left:585.0px;top:405px;width:87.0px;height:29.8px;overflow:hidden">
<span class="t" style="left:43.5px;top:7.6px;font-size:12px;line-height:16px;-webkit-text-stroke:0.22px #fff;color:#fff;transform:translateX(-50%) scaleX(0.9909);transform-origin:50% 50%;">Department</span>
</div>
<div class="a" style="left:673.0px;top:405px;width:87.0px;height:29.8px;overflow:hidden">
<span class="t" style="left:1.0px;top:7.6px;font-size:12px;line-height:16px;-webkit-text-stroke:0.22px #fff;color:#fff;transform:scaleX(0.9864);transform-origin:0 50%;">Sub-Department</span>
</div>
<div class="a" style="left:672.0px;top:405px;width:1px;height:29.8px;background:#d9d9d9;"></div>
<div class="a" style="left:761.0px;top:405px;width:87.0px;height:29.8px;overflow:hidden">
<span class="t" style="left:43.5px;top:7.6px;font-size:12px;line-height:16px;-webkit-text-stroke:0.22px #fff;color:#fff;transform:translateX(-50%) scaleX(0.9688);transform-origin:50% 50%;">Category Name</span>
</div>
<div class="a" style="left:760.0px;top:405px;width:1px;height:29.8px;background:#d9d9d9;"></div>
<div class="a" style="left:849.0px;top:405px;width:86.20000000000005px;height:29.8px;overflow:hidden">
<span class="t" style="left:1.0px;top:7.6px;font-size:12px;line-height:16px;-webkit-text-stroke:0.22px #fff;color:#fff;transform:scaleX(0.9448);transform-origin:0 50%;">Display Sequence</span>
</div>
<div class="a" style="left:848.0px;top:405px;width:1px;height:29.8px;background:#d9d9d9;"></div>
<div class="a" style="left:936.2px;top:405px;width:87.0px;height:29.8px;overflow:hidden">
<span class="t" style="left:43.5px;top:7.6px;font-size:12px;line-height:16px;-webkit-text-stroke:0.22px #fff;color:#fff;transform:translateX(-50%) scaleX(0.9751);transform-origin:50% 50%;">Account Name</span>
</div>
<div class="a" style="left:935.2px;top:405px;width:1px;height:29.8px;background:#d9d9d9;"></div>
<div class="a" style="left:1024.2px;top:405px;width:87.0px;height:29.8px;overflow:hidden">
<span class="t" style="left:1.0px;top:7.6px;font-size:12px;line-height:16px;-webkit-text-stroke:0.22px #fff;color:#fff;transform:scaleX(0.9603);transform-origin:0 50%;">Classification Name</span>
</div>
<div class="a" style="left:1023.2px;top:405px;width:1px;height:29.8px;background:#d9d9d9;"></div>
<div class="a" style="left:1112.2px;top:405px;width:87.0px;height:29.8px;overflow:hidden">
<span class="t" style="left:1.0px;top:7.6px;font-size:12px;line-height:16px;-webkit-text-stroke:0.22px #fff;color:#fff;transform:scaleX(0.9703);transform-origin:0 50%;">Quick book Sync</span>
</div>
<div class="a" style="left:1111.2px;top:405px;width:1px;height:29.8px;background:#d9d9d9;"></div>
<div class="a" style="left:1200.2px;top:405px;width:128.79999999999995px;height:29.8px;overflow:hidden">
<span class="t" style="left:64.4px;top:7.6px;font-size:12px;line-height:16px;-webkit-text-stroke:0.22px #fff;color:#fff;transform:translateX(-50%) scaleX(0.9982);transform-origin:50% 50%;">Action</span>
</div>
<div class="a" style="left:1199.2px;top:405px;width:1px;height:29.8px;background:#d9d9d9;"></div>
<div class="a" style="left:585px;top:434.8px;width:744.5px;height:33px;background:#f5f5f5;"></div>
<div class="a" style="left:585px;top:467.0px;width:745px;height:1px;background:#111;"></div>
<div class="a" style="left:672.0px;top:434.8px;width:1px;height:32.2px;background:#dcdcdc;"></div>
<div class="a" style="left:760.0px;top:434.8px;width:1px;height:32.2px;background:#dcdcdc;"></div>
<div class="a" style="left:848.0px;top:434.8px;width:1px;height:32.2px;background:#dcdcdc;"></div>
<div class="a" style="left:935.2px;top:434.8px;width:1px;height:32.2px;background:#dcdcdc;"></div>
<div class="a" style="left:1023.2px;top:434.8px;width:1px;height:32.2px;background:#dcdcdc;"></div>
<div class="a" style="left:1111.2px;top:434.8px;width:1px;height:32.2px;background:#dcdcdc;"></div>
<div class="a" style="left:1199.2px;top:434.8px;width:1px;height:32.2px;background:#dcdcdc;"></div>
<span class="t" style="left:628.5px;top:443.6px;font-size:12px;line-height:16px;-webkit-text-stroke:0.12px #111;color:#111;transform:translateX(-50%) scaleX(0.9683);transform-origin:50% 50%;">Kitchen</span>
<span class="t" style="left:716.5px;top:443.6px;font-size:12px;line-height:16px;-webkit-text-stroke:0.12px #111;color:#111;transform:translateX(-50%) scaleX(0.9550);transform-origin:50% 50%;">Drinks</span>
<span class="t" style="left:804.5px;top:443.6px;font-size:12px;line-height:16px;-webkit-text-stroke:0.12px #111;color:#111;transform:translateX(-50%) scaleX(0.9485);transform-origin:50% 50%;">Energy Drinks</span>
<span class="t" style="left:892.1px;top:443.6px;font-size:12px;line-height:16px;-webkit-text-stroke:0.12px #111;color:#111;transform:translateX(-50%) scaleX(0.9575);transform-origin:50% 50%;">0</span>
<div class="a" style="left:1137px;top:440.40000000000003px;width:22px;height:22px;background:#d5dadd;border-radius:3px;"></div>
<svg class="a" style="left:1137px;top:440.40000000000003px;" width="22" height="22" viewBox="0 0 22 22"><path d="M5.2 11.3 L9.3 15.3 L16.8 6.6" fill="none" stroke="#fff" stroke-width="2.6"/></svg>
<div class="a" style="left:1203px;top:439.20000000000005px;width:60px;height:24.8px;background:#2d2926;border-radius:4px;"></div>
<span class="t" style="left:1233.0px;top:443.6px;font-size:12.5px;line-height:16px;-webkit-text-stroke:0.22px #fff;color:#fff;transform:translateX(-50%) scaleX(0.9558);transform-origin:50% 50%;">Edit</span>
<div class="a" style="left:1266px;top:439.20000000000005px;width:60px;height:24.8px;background:#918f8d;border-radius:4px;"></div>
<span class="t" style="left:1296.0px;top:443.6px;font-size:12.5px;line-height:16px;color:#e6e6e6;transform:translateX(-50%) scaleX(0.9580);transform-origin:50% 50%;">Delete</span>
<div class="a" style="left:585px;top:467.8px;width:744.5px;height:33px;background:#fff;"></div>
<div class="a" style="left:585px;top:500.0px;width:745px;height:1px;background:#111;"></div>
<div class="a" style="left:672.0px;top:467.8px;width:1px;height:32.2px;background:#dcdcdc;"></div>
<div class="a" style="left:760.0px;top:467.8px;width:1px;height:32.2px;background:#dcdcdc;"></div>
<div class="a" style="left:848.0px;top:467.8px;width:1px;height:32.2px;background:#dcdcdc;"></div>
<div class="a" style="left:935.2px;top:467.8px;width:1px;height:32.2px;background:#dcdcdc;"></div>
<div class="a" style="left:1023.2px;top:467.8px;width:1px;height:32.2px;background:#dcdcdc;"></div>
<div class="a" style="left:1111.2px;top:467.8px;width:1px;height:32.2px;background:#dcdcdc;"></div>
<div class="a" style="left:1199.2px;top:467.8px;width:1px;height:32.2px;background:#dcdcdc;"></div>
<span class="t" style="left:628.5px;top:476.6px;font-size:12px;line-height:16px;-webkit-text-stroke:0.12px #111;color:#111;transform:translateX(-50%) scaleX(0.9683);transform-origin:50% 50%;">Kitchen</span>
<span class="t" style="left:716.5px;top:476.6px;font-size:12px;line-height:16px;-webkit-text-stroke:0.12px #111;color:#111;transform:translateX(-50%) scaleX(0.9550);transform-origin:50% 50%;">Drinks</span>
<span class="t" style="left:804.5px;top:476.6px;font-size:12px;line-height:16px;-webkit-text-stroke:0.12px #111;color:#111;transform:translateX(-50%) scaleX(0.9485);transform-origin:50% 50%;">Energy Drinks</span>
<span class="t" style="left:892.1px;top:476.6px;font-size:12px;line-height:16px;-webkit-text-stroke:0.12px #111;color:#111;transform:translateX(-50%) scaleX(0.9575);transform-origin:50% 50%;">0</span>
<div class="a" style="left:1137px;top:473.40000000000003px;width:22px;height:22px;background:#d5dadd;border-radius:3px;"></div>
<svg class="a" style="left:1137px;top:473.40000000000003px;" width="22" height="22" viewBox="0 0 22 22"><path d="M5.2 11.3 L9.3 15.3 L16.8 6.6" fill="none" stroke="#fff" stroke-width="2.6"/></svg>
<div class="a" style="left:1203px;top:471.5px;width:57.5px;height:24.8px;background:#262220;box-shadow:inset 0 0 4px rgba(0,0,0,.6);"></div>
<span class="t" style="left:1233.0px;top:476.6px;font-size:12.5px;line-height:16px;-webkit-text-stroke:0.22px #fff;color:#fff;transform:translateX(-50%) scaleX(0.9558);transform-origin:50% 50%;">Edit</span>
<div class="a" style="left:1266px;top:472.20000000000005px;width:60px;height:24.8px;background:#918f8d;border-radius:4px;"></div>
<span class="t" style="left:1296.0px;top:476.6px;font-size:12.5px;line-height:16px;color:#e6e6e6;transform:translateX(-50%) scaleX(0.9580);transform-origin:50% 50%;">Delete</span>
<div class="a" style="left:585px;top:500.8px;width:744.5px;height:33px;background:#f5f5f5;"></div>
<div class="a" style="left:585px;top:533.0px;width:745px;height:1px;background:#111;"></div>
<div class="a" style="left:672.0px;top:500.8px;width:1px;height:32.2px;background:#dcdcdc;"></div>
<div class="a" style="left:760.0px;top:500.8px;width:1px;height:32.2px;background:#dcdcdc;"></div>
<div class="a" style="left:848.0px;top:500.8px;width:1px;height:32.2px;background:#dcdcdc;"></div>
<div class="a" style="left:935.2px;top:500.8px;width:1px;height:32.2px;background:#dcdcdc;"></div>
<div class="a" style="left:1023.2px;top:500.8px;width:1px;height:32.2px;background:#dcdcdc;"></div>
<div class="a" style="left:1111.2px;top:500.8px;width:1px;height:32.2px;background:#dcdcdc;"></div>
<div class="a" style="left:1199.2px;top:500.8px;width:1px;height:32.2px;background:#dcdcdc;"></div>
<span class="t" style="left:628.5px;top:509.6px;font-size:12px;line-height:16px;-webkit-text-stroke:0.12px #111;color:#111;transform:translateX(-50%) scaleX(0.9683);transform-origin:50% 50%;">Kitchen</span>
<span class="t" style="left:716.5px;top:509.6px;font-size:12px;line-height:16px;-webkit-text-stroke:0.12px #111;color:#111;transform:translateX(-50%) scaleX(0.9550);transform-origin:50% 50%;">Drinks</span>
<span class="t" style="left:804.5px;top:509.6px;font-size:12px;line-height:16px;-webkit-text-stroke:0.12px #111;color:#111;transform:translateX(-50%) scaleX(0.9099);transform-origin:50% 50%;">Juice</span>
<span class="t" style="left:892.1px;top:509.6px;font-size:12px;line-height:16px;-webkit-text-stroke:0.12px #111;color:#111;transform:translateX(-50%) scaleX(0.9575);transform-origin:50% 50%;">0</span>
<div class="a" style="left:1137px;top:506.40000000000003px;width:22px;height:22px;background:#d5dadd;border-radius:3px;"></div>
<svg class="a" style="left:1137px;top:506.40000000000003px;" width="22" height="22" viewBox="0 0 22 22"><path d="M5.2 11.3 L9.3 15.3 L16.8 6.6" fill="none" stroke="#fff" stroke-width="2.6"/></svg>
<div class="a" style="left:1203px;top:505.20000000000005px;width:60px;height:24.8px;background:#2d2926;border-radius:4px;"></div>
<span class="t" style="left:1233.0px;top:509.6px;font-size:12.5px;line-height:16px;-webkit-text-stroke:0.22px #fff;color:#fff;transform:translateX(-50%) scaleX(0.9558);transform-origin:50% 50%;">Edit</span>
<div class="a" style="left:1266px;top:505.20000000000005px;width:60px;height:24.8px;background:#918f8d;border-radius:4px;"></div>
<span class="t" style="left:1296.0px;top:509.6px;font-size:12.5px;line-height:16px;color:#e6e6e6;transform:translateX(-50%) scaleX(0.9580);transform-origin:50% 50%;">Delete</span>
<div class="a" style="left:585px;top:533.8px;width:744.5px;height:33px;background:#fff;"></div>
<div class="a" style="left:585px;top:566.0px;width:745px;height:1px;background:#111;"></div>
<div class="a" style="left:672.0px;top:533.8px;width:1px;height:32.2px;background:#dcdcdc;"></div>
<div class="a" style="left:760.0px;top:533.8px;width:1px;height:32.2px;background:#dcdcdc;"></div>
<div class="a" style="left:848.0px;top:533.8px;width:1px;height:32.2px;background:#dcdcdc;"></div>
<div class="a" style="left:935.2px;top:533.8px;width:1px;height:32.2px;background:#dcdcdc;"></div>
<div class="a" style="left:1023.2px;top:533.8px;width:1px;height:32.2px;background:#dcdcdc;"></div>
<div class="a" style="left:1111.2px;top:533.8px;width:1px;height:32.2px;background:#dcdcdc;"></div>
<div class="a" style="left:1199.2px;top:533.8px;width:1px;height:32.2px;background:#dcdcdc;"></div>
<span class="t" style="left:628.5px;top:542.6px;font-size:12px;line-height:16px;-webkit-text-stroke:0.12px #111;color:#111;transform:translateX(-50%) scaleX(0.9683);transform-origin:50% 50%;">Kitchen</span>
<span class="t" style="left:716.5px;top:542.6px;font-size:12px;line-height:16px;-webkit-text-stroke:0.12px #111;color:#111;transform:translateX(-50%) scaleX(0.9550);transform-origin:50% 50%;">Drinks</span>
<span class="t" style="left:804.5px;top:542.6px;font-size:12px;line-height:16px;-webkit-text-stroke:0.12px #111;color:#111;transform:translateX(-50%) scaleX(0.9750);transform-origin:50% 50%;">Warm Drinks</span>
<span class="t" style="left:892.1px;top:542.6px;font-size:12px;line-height:16px;-webkit-text-stroke:0.12px #111;color:#111;transform:translateX(-50%) scaleX(0.9575);transform-origin:50% 50%;">0</span>
<div class="a" style="left:1137px;top:539.3999999999999px;width:22px;height:22px;background:#d5dadd;border-radius:3px;"></div>
<svg class="a" style="left:1137px;top:539.3999999999999px;" width="22" height="22" viewBox="0 0 22 22"><path d="M5.2 11.3 L9.3 15.3 L16.8 6.6" fill="none" stroke="#fff" stroke-width="2.6"/></svg>
<div class="a" style="left:1203px;top:538.1999999999999px;width:60px;height:24.8px;background:#2d2926;border-radius:4px;"></div>
<span class="t" style="left:1233.0px;top:542.6px;font-size:12.5px;line-height:16px;-webkit-text-stroke:0.22px #fff;color:#fff;transform:translateX(-50%) scaleX(0.9558);transform-origin:50% 50%;">Edit</span>
<div class="a" style="left:1266px;top:538.1999999999999px;width:60px;height:24.8px;background:#918f8d;border-radius:4px;"></div>
<span class="t" style="left:1296.0px;top:542.6px;font-size:12.5px;line-height:16px;color:#e6e6e6;transform:translateX(-50%) scaleX(0.9580);transform-origin:50% 50%;">Delete</span>
<div class="a" style="left:585px;top:566.8px;width:744.5px;height:33px;background:#f5f5f5;"></div>
<div class="a" style="left:585px;top:599.0px;width:745px;height:1px;background:#111;"></div>
<div class="a" style="left:672.0px;top:566.8px;width:1px;height:32.2px;background:#dcdcdc;"></div>
<div class="a" style="left:760.0px;top:566.8px;width:1px;height:32.2px;background:#dcdcdc;"></div>
<div class="a" style="left:848.0px;top:566.8px;width:1px;height:32.2px;background:#dcdcdc;"></div>
<div class="a" style="left:935.2px;top:566.8px;width:1px;height:32.2px;background:#dcdcdc;"></div>
<div class="a" style="left:1023.2px;top:566.8px;width:1px;height:32.2px;background:#dcdcdc;"></div>
<div class="a" style="left:1111.2px;top:566.8px;width:1px;height:32.2px;background:#dcdcdc;"></div>
<div class="a" style="left:1199.2px;top:566.8px;width:1px;height:32.2px;background:#dcdcdc;"></div>
<span class="t" style="left:628.5px;top:575.6px;font-size:12px;line-height:16px;-webkit-text-stroke:0.12px #111;color:#111;transform:translateX(-50%) scaleX(0.9683);transform-origin:50% 50%;">Kitchen</span>
<span class="t" style="left:716.5px;top:575.6px;font-size:12px;line-height:16px;-webkit-text-stroke:0.12px #111;color:#111;transform:translateX(-50%) scaleX(0.9550);transform-origin:50% 50%;">Drinks</span>
<span class="t" style="left:804.5px;top:575.6px;font-size:12px;line-height:16px;-webkit-text-stroke:0.12px #111;color:#111;transform:translateX(-50%) scaleX(0.9859);transform-origin:50% 50%;">Cold Water</span>
<span class="t" style="left:892.1px;top:575.6px;font-size:12px;line-height:16px;-webkit-text-stroke:0.12px #111;color:#111;transform:translateX(-50%) scaleX(0.9575);transform-origin:50% 50%;">0</span>
<div class="a" style="left:1137px;top:572.3999999999999px;width:22px;height:22px;background:#d5dadd;border-radius:3px;"></div>
<svg class="a" style="left:1137px;top:572.3999999999999px;" width="22" height="22" viewBox="0 0 22 22"><path d="M5.2 11.3 L9.3 15.3 L16.8 6.6" fill="none" stroke="#fff" stroke-width="2.6"/></svg>
<div class="a" style="left:1203px;top:571.1999999999999px;width:60px;height:24.8px;background:#2d2926;border-radius:4px;"></div>
<span class="t" style="left:1233.0px;top:575.6px;font-size:12.5px;line-height:16px;-webkit-text-stroke:0.22px #fff;color:#fff;transform:translateX(-50%) scaleX(0.9558);transform-origin:50% 50%;">Edit</span>
<div class="a" style="left:1266px;top:571.1999999999999px;width:60px;height:24.8px;background:#918f8d;border-radius:4px;"></div>
<span class="t" style="left:1296.0px;top:575.6px;font-size:12.5px;line-height:16px;color:#e6e6e6;transform:translateX(-50%) scaleX(0.9580);transform-origin:50% 50%;">Delete</span>
<div class="a" style="left:585px;top:599.8px;width:744.5px;height:33px;background:#fff;"></div>
<div class="a" style="left:585px;top:632.0px;width:745px;height:1px;background:#111;"></div>
<div class="a" style="left:672.0px;top:599.8px;width:1px;height:32.2px;background:#dcdcdc;"></div>
<div class="a" style="left:760.0px;top:599.8px;width:1px;height:32.2px;background:#dcdcdc;"></div>
<div class="a" style="left:848.0px;top:599.8px;width:1px;height:32.2px;background:#dcdcdc;"></div>
<div class="a" style="left:935.2px;top:599.8px;width:1px;height:32.2px;background:#dcdcdc;"></div>
<div class="a" style="left:1023.2px;top:599.8px;width:1px;height:32.2px;background:#dcdcdc;"></div>
<div class="a" style="left:1111.2px;top:599.8px;width:1px;height:32.2px;background:#dcdcdc;"></div>
<div class="a" style="left:1199.2px;top:599.8px;width:1px;height:32.2px;background:#dcdcdc;"></div>
<span class="t" style="left:628.5px;top:608.6px;font-size:12px;line-height:16px;-webkit-text-stroke:0.12px #111;color:#111;transform:translateX(-50%) scaleX(0.9683);transform-origin:50% 50%;">Kitchen</span>
<span class="t" style="left:716.5px;top:608.6px;font-size:12px;line-height:16px;-webkit-text-stroke:0.12px #111;color:#111;transform:translateX(-50%) scaleX(0.9550);transform-origin:50% 50%;">Drinks</span>
<span class="t" style="left:804.5px;top:608.6px;font-size:12px;line-height:16px;-webkit-text-stroke:0.12px #111;color:#111;transform:translateX(-50%) scaleX(0.9652);transform-origin:50% 50%;">Cold Drinks</span>
<span class="t" style="left:892.1px;top:608.6px;font-size:12px;line-height:16px;-webkit-text-stroke:0.12px #111;color:#111;transform:translateX(-50%) scaleX(0.9575);transform-origin:50% 50%;">0</span>
<div class="a" style="left:1137px;top:605.3999999999999px;width:22px;height:22px;background:#d5dadd;border-radius:3px;"></div>
<svg class="a" style="left:1137px;top:605.3999999999999px;" width="22" height="22" viewBox="0 0 22 22"><path d="M5.2 11.3 L9.3 15.3 L16.8 6.6" fill="none" stroke="#fff" stroke-width="2.6"/></svg>
<div class="a" style="left:1203px;top:604.1999999999999px;width:60px;height:24.8px;background:#2d2926;border-radius:4px;"></div>
<span class="t" style="left:1233.0px;top:608.6px;font-size:12.5px;line-height:16px;-webkit-text-stroke:0.22px #fff;color:#fff;transform:translateX(-50%) scaleX(0.9558);transform-origin:50% 50%;">Edit</span>
<div class="a" style="left:1266px;top:604.1999999999999px;width:60px;height:24.8px;background:#918f8d;border-radius:4px;"></div>
<span class="t" style="left:1296.0px;top:608.6px;font-size:12.5px;line-height:16px;color:#e6e6e6;transform:translateX(-50%) scaleX(0.9580);transform-origin:50% 50%;">Delete</span>
<div class="a" style="left:1335px;top:435.7px;width:6.6px;height:6.6px;background:#b2b2b2;border-radius:3.3px;"></div>
<div class="a" style="left:930.5px;top:647.5px;width:80.5px;height:25px;background:#2d2926;border-radius:3px;"></div>
<span class="t" style="left:970.7px;top:652.5px;font-size:12.5px;line-height:16px;-webkit-text-stroke:0.22px #fff;color:#fff;transform:translateX(-50%) scaleX(0.9251);transform-origin:50% 50%;">Close</span>
<div class="a" style="left:567px;top:206px;width:796px;height:480px;border:5px solid #e21010;"></div>
<div class="a" style="left:1031px;top:243.3px;width:159px;height:67.6px;border:5px solid #e21010;box-shadow:2px 3px 5px rgba(0,0,0,.45),inset 2px 3px 5px rgba(0,0,0,.4);"></div>
<div class="a" style="left:1153px;top:320.2px;width:89px;height:37px;border:5px solid #e21010;box-shadow:2px 3px 5px rgba(0,0,0,.45),inset 2px 3px 5px rgba(0,0,0,.4);"></div>
<div class="a" style="left:1198px;top:466.2px;width:67px;height:34.8px;border:5px solid #e21010;box-shadow:2px 3px 5px rgba(0,0,0,.45),inset 2px 3px 5px rgba(0,0,0,.4);"></div>
</body></html>
